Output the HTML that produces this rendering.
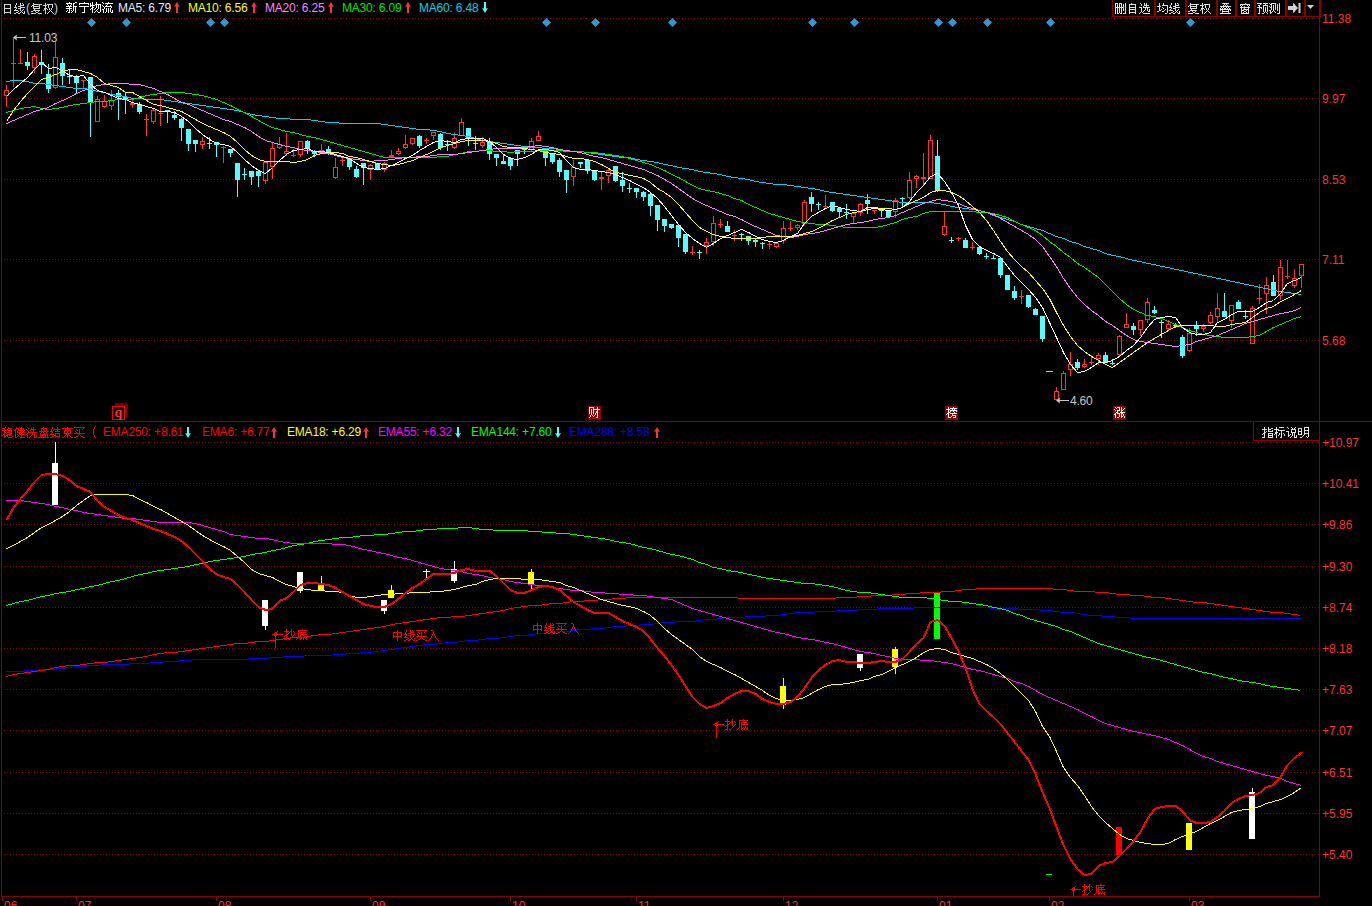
<!DOCTYPE html>
<html><head><meta charset="utf-8"><style>
html,body{margin:0;padding:0;background:#000;}
body{width:1372px;height:906px;overflow:hidden;position:relative;font-family:"Liberation Sans",sans-serif;}
.t{position:absolute;white-space:nowrap;font-size:12px;line-height:14px;letter-spacing:-0.2px;}
.ax{position:absolute;left:1322px;font-size:12px;line-height:12px;color:#ff3232;white-space:nowrap;}
.btn{position:absolute;top:0;height:16px;border:1px solid #8c0000;border-top:none;color:#e0e0e0;font-size:12px;line-height:16px;text-align:center;box-sizing:border-box;}
.mk{position:absolute;font-size:12px;line-height:14px;color:#ff0000;white-space:nowrap;}
.lab{position:absolute;top:406px;width:13px;height:14px;background:#990000;color:#fff;font-size:12px;line-height:14px;text-align:center;}
</style></head><body>
<svg width="1372" height="906" viewBox="0 0 1372 906" style="position:absolute;left:0;top:0"><g shape-rendering="crispEdges"><line x1="4" y1="18.5" x2="1319" y2="18.5" stroke="#8c0000" stroke-width="1" stroke-dasharray="1 2"/><line x1="4" y1="98.5" x2="1319" y2="98.5" stroke="#8c0000" stroke-width="1" stroke-dasharray="1 2"/><line x1="4" y1="179.5" x2="1319" y2="179.5" stroke="#8c0000" stroke-width="1" stroke-dasharray="1 2"/><line x1="4" y1="259.5" x2="1319" y2="259.5" stroke="#8c0000" stroke-width="1" stroke-dasharray="1 2"/><line x1="4" y1="340.5" x2="1319" y2="340.5" stroke="#8c0000" stroke-width="1" stroke-dasharray="1 2"/><line x1="4" y1="442.5" x2="1319" y2="442.5" stroke="#8c0000" stroke-width="1" stroke-dasharray="1 2"/><line x1="4" y1="483.5" x2="1319" y2="483.5" stroke="#8c0000" stroke-width="1" stroke-dasharray="1 2"/><line x1="4" y1="524.5" x2="1319" y2="524.5" stroke="#8c0000" stroke-width="1" stroke-dasharray="1 2"/><line x1="4" y1="566.5" x2="1319" y2="566.5" stroke="#8c0000" stroke-width="1" stroke-dasharray="1 2"/><line x1="4" y1="607.5" x2="1319" y2="607.5" stroke="#8c0000" stroke-width="1" stroke-dasharray="1 2"/><line x1="4" y1="648.5" x2="1319" y2="648.5" stroke="#8c0000" stroke-width="1" stroke-dasharray="1 2"/><line x1="4" y1="689.5" x2="1319" y2="689.5" stroke="#8c0000" stroke-width="1" stroke-dasharray="1 2"/><line x1="4" y1="730.5" x2="1319" y2="730.5" stroke="#8c0000" stroke-width="1" stroke-dasharray="1 2"/><line x1="4" y1="772.5" x2="1319" y2="772.5" stroke="#8c0000" stroke-width="1" stroke-dasharray="1 2"/><line x1="4" y1="813.5" x2="1319" y2="813.5" stroke="#8c0000" stroke-width="1" stroke-dasharray="1 2"/><line x1="4" y1="854.5" x2="1319" y2="854.5" stroke="#8c0000" stroke-width="1" stroke-dasharray="1 2"/><rect x="1" y="0" width="1" height="897" fill="#8c0000"/><rect x="1319" y="0" width="1" height="897" fill="#8c0000"/><rect x="1" y="421" width="1371" height="1" fill="#8c0000"/><rect x="1" y="896" width="1319" height="1" fill="#8c0000"/><rect x="2" y="897" width="1" height="4" fill="#8c0000"/><rect x="76" y="897" width="1" height="4" fill="#8c0000"/><rect x="216" y="897" width="1" height="4" fill="#8c0000"/><rect x="370" y="897" width="1" height="4" fill="#8c0000"/><rect x="510" y="897" width="1" height="4" fill="#8c0000"/><rect x="636" y="897" width="1" height="4" fill="#8c0000"/><rect x="783" y="897" width="1" height="4" fill="#8c0000"/><rect x="937" y="897" width="1" height="4" fill="#8c0000"/><rect x="1049" y="897" width="1" height="4" fill="#8c0000"/><rect x="1189" y="897" width="1" height="4" fill="#8c0000"/></g><g shape-rendering="crispEdges"><rect x="6" y="85" width="1" height="5" fill="#ff3232"/>
<rect x="6" y="96" width="1" height="11" fill="#ff3232"/>
<rect x="4.5" y="90.5" width="4" height="5" fill="none" stroke="#ff3232" stroke-width="1"/>
<rect x="13" y="38" width="1" height="49" fill="#ff3232"/>
<rect x="11" y="63" width="5" height="1" fill="#ff3232"/>
<rect x="20" y="49" width="1" height="15" fill="#ff3232"/>
<rect x="18" y="63" width="5" height="1" fill="#ff3232"/>
<rect x="27" y="52" width="1" height="10" fill="#54fcfc"/>
<rect x="27" y="66" width="1" height="4" fill="#54fcfc"/>
<rect x="25" y="62" width="5" height="4" fill="#54fcfc"/>
<rect x="34" y="54" width="1" height="2" fill="#ff3232"/>
<rect x="34" y="68" width="1" height="5" fill="#ff3232"/>
<rect x="32.5" y="56.5" width="4" height="11" fill="none" stroke="#ff3232" stroke-width="1"/>
<rect x="41" y="50" width="1" height="12" fill="#54fcfc"/>
<rect x="41" y="65" width="1" height="9" fill="#54fcfc"/>
<rect x="39" y="62" width="5" height="3" fill="#54fcfc"/>
<rect x="48" y="64" width="1" height="10" fill="#54fcfc"/>
<rect x="48" y="89" width="1" height="4" fill="#54fcfc"/>
<rect x="46" y="74" width="5" height="15" fill="#54fcfc"/>
<rect x="55" y="41" width="1" height="16" fill="#ff3232"/>
<rect x="55" y="88" width="1" height="1" fill="#ff3232"/>
<rect x="53.5" y="57.5" width="4" height="30" fill="none" stroke="#ff3232" stroke-width="1"/>
<rect x="62" y="58" width="1" height="5" fill="#54fcfc"/>
<rect x="62" y="76" width="1" height="9" fill="#54fcfc"/>
<rect x="60" y="63" width="5" height="13" fill="#54fcfc"/>
<rect x="69" y="70" width="1" height="14" fill="#54fcfc"/>
<rect x="67" y="76" width="5" height="1" fill="#54fcfc"/>
<rect x="76" y="75" width="1" height="1" fill="#54fcfc"/>
<rect x="76" y="83" width="1" height="11" fill="#54fcfc"/>
<rect x="74" y="76" width="5" height="7" fill="#54fcfc"/>
<rect x="83" y="80" width="1" height="8" fill="#ff3232"/>
<rect x="81" y="80" width="5" height="1" fill="#ff3232"/>
<rect x="90" y="102" width="1" height="35" fill="#54fcfc"/>
<rect x="88" y="77" width="5" height="25" fill="#54fcfc"/>
<rect x="97" y="96" width="1" height="3" fill="#ff3232"/>
<rect x="95.5" y="99.5" width="4" height="22" fill="none" stroke="#ff3232" stroke-width="1"/>
<rect x="104" y="95" width="1" height="6" fill="#ff3232"/>
<rect x="104" y="107" width="1" height="1" fill="#ff3232"/>
<rect x="102.5" y="101.5" width="4" height="5" fill="none" stroke="#ff3232" stroke-width="1"/>
<rect x="111" y="90" width="1" height="10" fill="#ff3232"/>
<rect x="111" y="106" width="1" height="4" fill="#ff3232"/>
<rect x="109.5" y="100.5" width="4" height="5" fill="none" stroke="#ff3232" stroke-width="1"/>
<rect x="118" y="90" width="1" height="3" fill="#54fcfc"/>
<rect x="118" y="97" width="1" height="23" fill="#54fcfc"/>
<rect x="116" y="93" width="5" height="4" fill="#54fcfc"/>
<rect x="125" y="92" width="1" height="5" fill="#54fcfc"/>
<rect x="125" y="100" width="1" height="14" fill="#54fcfc"/>
<rect x="123" y="97" width="5" height="3" fill="#54fcfc"/>
<rect x="132" y="99" width="1" height="4" fill="#ff3232"/>
<rect x="132" y="105" width="1" height="3" fill="#ff3232"/>
<rect x="130.5" y="103.5" width="4" height="1" fill="none" stroke="#ff3232" stroke-width="1"/>
<rect x="139" y="102" width="1" height="2" fill="#54fcfc"/>
<rect x="139" y="112" width="1" height="2" fill="#54fcfc"/>
<rect x="137" y="104" width="5" height="8" fill="#54fcfc"/>
<rect x="146" y="114" width="1" height="22" fill="#ff3232"/>
<rect x="144" y="119" width="5" height="1" fill="#ff3232"/>
<rect x="153" y="108" width="1" height="2" fill="#ff3232"/>
<rect x="153" y="122" width="1" height="2" fill="#ff3232"/>
<rect x="151.5" y="110.5" width="4" height="11" fill="none" stroke="#ff3232" stroke-width="1"/>
<rect x="160" y="96" width="1" height="30" fill="#ff3232"/>
<rect x="158" y="113" width="5" height="1" fill="#ff3232"/>
<rect x="167" y="112" width="1" height="11" fill="#54fcfc"/>
<rect x="165" y="110" width="5" height="2" fill="#54fcfc"/>
<rect x="174" y="111" width="1" height="4" fill="#54fcfc"/>
<rect x="174" y="118" width="1" height="2" fill="#54fcfc"/>
<rect x="172" y="115" width="5" height="3" fill="#54fcfc"/>
<rect x="181" y="118" width="1" height="1" fill="#54fcfc"/>
<rect x="181" y="128" width="1" height="13" fill="#54fcfc"/>
<rect x="179" y="119" width="5" height="9" fill="#54fcfc"/>
<rect x="188" y="144" width="1" height="7" fill="#54fcfc"/>
<rect x="186" y="129" width="5" height="15" fill="#54fcfc"/>
<rect x="195" y="144" width="1" height="8" fill="#54fcfc"/>
<rect x="193" y="140" width="5" height="4" fill="#54fcfc"/>
<rect x="202" y="137" width="1" height="4" fill="#ff3232"/>
<rect x="202" y="145" width="1" height="4" fill="#ff3232"/>
<rect x="200.5" y="141.5" width="4" height="3" fill="none" stroke="#ff3232" stroke-width="1"/>
<rect x="209" y="137" width="1" height="12" fill="#54fcfc"/>
<rect x="207" y="143" width="5" height="1" fill="#54fcfc"/>
<rect x="216" y="145" width="1" height="12" fill="#54fcfc"/>
<rect x="214" y="142" width="5" height="3" fill="#54fcfc"/>
<rect x="223" y="146" width="1" height="17" fill="#ff3232"/>
<rect x="221" y="147" width="5" height="1" fill="#ff3232"/>
<rect x="230" y="153" width="1" height="4" fill="#54fcfc"/>
<rect x="228" y="149" width="5" height="4" fill="#54fcfc"/>
<rect x="237" y="180" width="1" height="17" fill="#54fcfc"/>
<rect x="235" y="163" width="5" height="17" fill="#54fcfc"/>
<rect x="244" y="168" width="1" height="12" fill="#54fcfc"/>
<rect x="242" y="174" width="5" height="1" fill="#54fcfc"/>
<rect x="251" y="177" width="1" height="8" fill="#54fcfc"/>
<rect x="249" y="171" width="5" height="6" fill="#54fcfc"/>
<rect x="258" y="176" width="1" height="11" fill="#54fcfc"/>
<rect x="256" y="171" width="5" height="5" fill="#54fcfc"/>
<rect x="265" y="181" width="1" height="3" fill="#ff3232"/>
<rect x="263.5" y="162.5" width="4" height="18" fill="none" stroke="#ff3232" stroke-width="1"/>
<rect x="272" y="142" width="1" height="6" fill="#ff3232"/>
<rect x="272" y="167" width="1" height="12" fill="#ff3232"/>
<rect x="270.5" y="148.5" width="4" height="18" fill="none" stroke="#ff3232" stroke-width="1"/>
<rect x="279" y="137" width="1" height="7" fill="#ff3232"/>
<rect x="279" y="148" width="1" height="1" fill="#ff3232"/>
<rect x="277.5" y="144.5" width="4" height="3" fill="none" stroke="#ff3232" stroke-width="1"/>
<rect x="286" y="133" width="1" height="18" fill="#ff3232"/>
<rect x="286" y="154" width="1" height="2" fill="#ff3232"/>
<rect x="284.5" y="151.5" width="4" height="2" fill="none" stroke="#ff3232" stroke-width="1"/>
<rect x="293" y="149" width="1" height="8" fill="#ff3232"/>
<rect x="291" y="155" width="5" height="1" fill="#ff3232"/>
<rect x="300" y="155" width="1" height="2" fill="#ff3232"/>
<rect x="298.5" y="141.5" width="4" height="13" fill="none" stroke="#ff3232" stroke-width="1"/>
<rect x="307" y="140" width="1" height="1" fill="#54fcfc"/>
<rect x="307" y="149" width="1" height="5" fill="#54fcfc"/>
<rect x="305" y="141" width="5" height="8" fill="#54fcfc"/>
<rect x="314" y="150" width="1" height="1" fill="#54fcfc"/>
<rect x="314" y="154" width="1" height="3" fill="#54fcfc"/>
<rect x="312" y="151" width="5" height="3" fill="#54fcfc"/>
<rect x="321" y="144" width="1" height="6" fill="#ff3232"/>
<rect x="319.5" y="150.5" width="4" height="3" fill="none" stroke="#ff3232" stroke-width="1"/>
<rect x="328" y="146" width="1" height="3" fill="#54fcfc"/>
<rect x="328" y="154" width="1" height="1" fill="#54fcfc"/>
<rect x="326" y="149" width="5" height="5" fill="#54fcfc"/>
<rect x="335" y="158" width="1" height="9" fill="#ff3232"/>
<rect x="335" y="178" width="1" height="1" fill="#ff3232"/>
<rect x="333.5" y="167.5" width="4" height="10" fill="none" stroke="#ff3232" stroke-width="1"/>
<rect x="342" y="156" width="1" height="10" fill="#ff3232"/>
<rect x="340" y="160" width="5" height="1" fill="#ff3232"/>
<rect x="349" y="167" width="1" height="3" fill="#54fcfc"/>
<rect x="347" y="159" width="5" height="8" fill="#54fcfc"/>
<rect x="356" y="166" width="1" height="3" fill="#54fcfc"/>
<rect x="356" y="177" width="1" height="1" fill="#54fcfc"/>
<rect x="354" y="169" width="5" height="8" fill="#54fcfc"/>
<rect x="363" y="168" width="1" height="17" fill="#54fcfc"/>
<rect x="361" y="163" width="5" height="5" fill="#54fcfc"/>
<rect x="370" y="164" width="1" height="1" fill="#ff3232"/>
<rect x="370" y="170" width="1" height="10" fill="#ff3232"/>
<rect x="368.5" y="165.5" width="4" height="4" fill="none" stroke="#ff3232" stroke-width="1"/>
<rect x="377" y="169" width="1" height="1" fill="#54fcfc"/>
<rect x="375" y="163" width="5" height="6" fill="#54fcfc"/>
<rect x="384" y="162" width="1" height="1" fill="#ff3232"/>
<rect x="384" y="170" width="1" height="2" fill="#ff3232"/>
<rect x="382.5" y="163.5" width="4" height="6" fill="none" stroke="#ff3232" stroke-width="1"/>
<rect x="391" y="150" width="1" height="5" fill="#ff3232"/>
<rect x="391" y="157" width="1" height="1" fill="#ff3232"/>
<rect x="389.5" y="155.5" width="4" height="1" fill="none" stroke="#ff3232" stroke-width="1"/>
<rect x="398" y="148" width="1" height="3" fill="#ff3232"/>
<rect x="398" y="154" width="1" height="1" fill="#ff3232"/>
<rect x="396.5" y="151.5" width="4" height="2" fill="none" stroke="#ff3232" stroke-width="1"/>
<rect x="405" y="135" width="1" height="9" fill="#ff3232"/>
<rect x="405" y="148" width="1" height="1" fill="#ff3232"/>
<rect x="403.5" y="144.5" width="4" height="3" fill="none" stroke="#ff3232" stroke-width="1"/>
<rect x="412" y="144" width="1" height="1" fill="#ff3232"/>
<rect x="410.5" y="138.5" width="4" height="5" fill="none" stroke="#ff3232" stroke-width="1"/>
<rect x="419" y="135" width="1" height="1" fill="#54fcfc"/>
<rect x="419" y="146" width="1" height="2" fill="#54fcfc"/>
<rect x="417" y="136" width="5" height="10" fill="#54fcfc"/>
<rect x="426" y="138" width="1" height="6" fill="#ff3232"/>
<rect x="424" y="140" width="5" height="1" fill="#ff3232"/>
<rect x="433" y="136" width="1" height="4" fill="#ff3232"/>
<rect x="431.5" y="132.5" width="4" height="3" fill="none" stroke="#ff3232" stroke-width="1"/>
<rect x="440" y="133" width="1" height="1" fill="#54fcfc"/>
<rect x="440" y="148" width="1" height="2" fill="#54fcfc"/>
<rect x="438" y="134" width="5" height="14" fill="#54fcfc"/>
<rect x="447" y="140" width="1" height="11" fill="#54fcfc"/>
<rect x="445" y="144" width="5" height="1" fill="#54fcfc"/>
<rect x="454" y="132" width="1" height="6" fill="#ff3232"/>
<rect x="454" y="148" width="1" height="1" fill="#ff3232"/>
<rect x="452.5" y="138.5" width="4" height="9" fill="none" stroke="#ff3232" stroke-width="1"/>
<rect x="461" y="118" width="1" height="4" fill="#ff3232"/>
<rect x="459.5" y="122.5" width="4" height="13" fill="none" stroke="#ff3232" stroke-width="1"/>
<rect x="468" y="139" width="1" height="7" fill="#54fcfc"/>
<rect x="466" y="128" width="5" height="11" fill="#54fcfc"/>
<rect x="475" y="136" width="1" height="14" fill="#54fcfc"/>
<rect x="473" y="143" width="5" height="1" fill="#54fcfc"/>
<rect x="482" y="137" width="1" height="5" fill="#ff3232"/>
<rect x="482" y="146" width="1" height="2" fill="#ff3232"/>
<rect x="480.5" y="142.5" width="4" height="3" fill="none" stroke="#ff3232" stroke-width="1"/>
<rect x="489" y="138" width="1" height="3" fill="#54fcfc"/>
<rect x="489" y="154" width="1" height="6" fill="#54fcfc"/>
<rect x="487" y="141" width="5" height="13" fill="#54fcfc"/>
<rect x="496" y="158" width="1" height="8" fill="#54fcfc"/>
<rect x="494" y="154" width="5" height="4" fill="#54fcfc"/>
<rect x="503" y="154" width="1" height="7" fill="#54fcfc"/>
<rect x="501" y="161" width="5" height="3" fill="#54fcfc"/>
<rect x="510" y="157" width="1" height="1" fill="#54fcfc"/>
<rect x="510" y="166" width="1" height="4" fill="#54fcfc"/>
<rect x="508" y="158" width="5" height="8" fill="#54fcfc"/>
<rect x="517" y="154" width="1" height="12" fill="#54fcfc"/>
<rect x="515" y="150" width="5" height="4" fill="#54fcfc"/>
<rect x="524" y="148" width="1" height="6" fill="#54fcfc"/>
<rect x="522" y="149" width="5" height="1" fill="#54fcfc"/>
<rect x="531" y="138" width="1" height="3" fill="#ff3232"/>
<rect x="531" y="150" width="1" height="1" fill="#ff3232"/>
<rect x="529.5" y="141.5" width="4" height="8" fill="none" stroke="#ff3232" stroke-width="1"/>
<rect x="538" y="131" width="1" height="5" fill="#ff3232"/>
<rect x="536.5" y="136.5" width="4" height="4" fill="none" stroke="#ff3232" stroke-width="1"/>
<rect x="545" y="149" width="1" height="2" fill="#54fcfc"/>
<rect x="545" y="158" width="1" height="8" fill="#54fcfc"/>
<rect x="543" y="151" width="5" height="7" fill="#54fcfc"/>
<rect x="552" y="162" width="1" height="2" fill="#54fcfc"/>
<rect x="550" y="154" width="5" height="8" fill="#54fcfc"/>
<rect x="559" y="158" width="1" height="2" fill="#54fcfc"/>
<rect x="559" y="172" width="1" height="5" fill="#54fcfc"/>
<rect x="557" y="160" width="5" height="12" fill="#54fcfc"/>
<rect x="566" y="180" width="1" height="13" fill="#54fcfc"/>
<rect x="564" y="170" width="5" height="10" fill="#54fcfc"/>
<rect x="573" y="160" width="1" height="7" fill="#ff3232"/>
<rect x="573" y="177" width="1" height="9" fill="#ff3232"/>
<rect x="571.5" y="167.5" width="4" height="9" fill="none" stroke="#ff3232" stroke-width="1"/>
<rect x="580" y="164" width="1" height="4" fill="#54fcfc"/>
<rect x="578" y="162" width="5" height="2" fill="#54fcfc"/>
<rect x="587" y="171" width="1" height="3" fill="#54fcfc"/>
<rect x="585" y="160" width="5" height="11" fill="#54fcfc"/>
<rect x="594" y="170" width="1" height="1" fill="#54fcfc"/>
<rect x="594" y="180" width="1" height="1" fill="#54fcfc"/>
<rect x="592" y="171" width="5" height="9" fill="#54fcfc"/>
<rect x="601" y="172" width="1" height="5" fill="#ff3232"/>
<rect x="601" y="179" width="1" height="11" fill="#ff3232"/>
<rect x="599.5" y="177.5" width="4" height="1" fill="none" stroke="#ff3232" stroke-width="1"/>
<rect x="608" y="168" width="1" height="2" fill="#ff3232"/>
<rect x="608" y="176" width="1" height="7" fill="#ff3232"/>
<rect x="606.5" y="170.5" width="4" height="5" fill="none" stroke="#ff3232" stroke-width="1"/>
<rect x="615" y="181" width="1" height="1" fill="#54fcfc"/>
<rect x="613" y="166" width="5" height="15" fill="#54fcfc"/>
<rect x="622" y="172" width="1" height="8" fill="#54fcfc"/>
<rect x="622" y="186" width="1" height="6" fill="#54fcfc"/>
<rect x="620" y="180" width="5" height="6" fill="#54fcfc"/>
<rect x="629" y="183" width="1" height="10" fill="#54fcfc"/>
<rect x="627" y="188" width="5" height="1" fill="#54fcfc"/>
<rect x="636" y="192" width="1" height="6" fill="#54fcfc"/>
<rect x="634" y="188" width="5" height="4" fill="#54fcfc"/>
<rect x="643" y="191" width="1" height="1" fill="#54fcfc"/>
<rect x="643" y="197" width="1" height="4" fill="#54fcfc"/>
<rect x="641" y="192" width="5" height="5" fill="#54fcfc"/>
<rect x="650" y="193" width="1" height="1" fill="#54fcfc"/>
<rect x="650" y="206" width="1" height="10" fill="#54fcfc"/>
<rect x="648" y="194" width="5" height="12" fill="#54fcfc"/>
<rect x="657" y="220" width="1" height="11" fill="#54fcfc"/>
<rect x="655" y="205" width="5" height="15" fill="#54fcfc"/>
<rect x="664" y="226" width="1" height="6" fill="#54fcfc"/>
<rect x="662" y="219" width="5" height="7" fill="#54fcfc"/>
<rect x="671" y="228" width="1" height="1" fill="#54fcfc"/>
<rect x="669" y="224" width="5" height="4" fill="#54fcfc"/>
<rect x="678" y="238" width="1" height="9" fill="#54fcfc"/>
<rect x="676" y="225" width="5" height="13" fill="#54fcfc"/>
<rect x="685" y="252" width="1" height="2" fill="#54fcfc"/>
<rect x="683" y="234" width="5" height="18" fill="#54fcfc"/>
<rect x="692" y="246" width="1" height="9" fill="#ff3232"/>
<rect x="690" y="252" width="5" height="1" fill="#ff3232"/>
<rect x="699" y="250" width="1" height="9" fill="#54fcfc"/>
<rect x="697" y="252" width="5" height="1" fill="#54fcfc"/>
<rect x="706" y="238" width="1" height="4" fill="#ff3232"/>
<rect x="706" y="246" width="1" height="8" fill="#ff3232"/>
<rect x="704.5" y="242.5" width="4" height="3" fill="none" stroke="#ff3232" stroke-width="1"/>
<rect x="713" y="216" width="1" height="7" fill="#ff3232"/>
<rect x="713" y="242" width="1" height="4" fill="#ff3232"/>
<rect x="711.5" y="223.5" width="4" height="18" fill="none" stroke="#ff3232" stroke-width="1"/>
<rect x="720" y="219" width="1" height="9" fill="#ff3232"/>
<rect x="718" y="224" width="5" height="1" fill="#ff3232"/>
<rect x="727" y="221" width="1" height="5" fill="#54fcfc"/>
<rect x="725" y="226" width="5" height="6" fill="#54fcfc"/>
<rect x="734" y="230" width="1" height="11" fill="#ff3232"/>
<rect x="732" y="235" width="5" height="1" fill="#ff3232"/>
<rect x="741" y="233" width="1" height="8" fill="#54fcfc"/>
<rect x="739" y="234" width="5" height="1" fill="#54fcfc"/>
<rect x="748" y="241" width="1" height="4" fill="#54fcfc"/>
<rect x="746" y="236" width="5" height="5" fill="#54fcfc"/>
<rect x="755" y="238" width="1" height="2" fill="#54fcfc"/>
<rect x="755" y="242" width="1" height="5" fill="#54fcfc"/>
<rect x="753" y="240" width="5" height="2" fill="#54fcfc"/>
<rect x="762" y="242" width="1" height="7" fill="#54fcfc"/>
<rect x="760" y="243" width="5" height="1" fill="#54fcfc"/>
<rect x="769" y="242" width="1" height="7" fill="#ff3232"/>
<rect x="767" y="244" width="5" height="1" fill="#ff3232"/>
<rect x="776" y="242" width="1" height="1" fill="#ff3232"/>
<rect x="776" y="247" width="1" height="1" fill="#ff3232"/>
<rect x="774.5" y="243.5" width="4" height="3" fill="none" stroke="#ff3232" stroke-width="1"/>
<rect x="783" y="221" width="1" height="7" fill="#ff3232"/>
<rect x="783" y="241" width="1" height="3" fill="#ff3232"/>
<rect x="781.5" y="228.5" width="4" height="12" fill="none" stroke="#ff3232" stroke-width="1"/>
<rect x="790" y="221" width="1" height="10" fill="#ff3232"/>
<rect x="788" y="228" width="5" height="1" fill="#ff3232"/>
<rect x="797" y="224" width="1" height="1" fill="#ff3232"/>
<rect x="797" y="228" width="1" height="2" fill="#ff3232"/>
<rect x="795.5" y="225.5" width="4" height="2" fill="none" stroke="#ff3232" stroke-width="1"/>
<rect x="804" y="200" width="1" height="2" fill="#ff3232"/>
<rect x="804" y="224" width="1" height="1" fill="#ff3232"/>
<rect x="802.5" y="202.5" width="4" height="21" fill="none" stroke="#ff3232" stroke-width="1"/>
<rect x="811" y="192" width="1" height="5" fill="#54fcfc"/>
<rect x="811" y="204" width="1" height="8" fill="#54fcfc"/>
<rect x="809" y="197" width="5" height="7" fill="#54fcfc"/>
<rect x="818" y="202" width="1" height="8" fill="#54fcfc"/>
<rect x="816" y="204" width="5" height="1" fill="#54fcfc"/>
<rect x="825" y="195" width="1" height="13" fill="#ff3232"/>
<rect x="823" y="206" width="5" height="1" fill="#ff3232"/>
<rect x="832" y="211" width="1" height="1" fill="#54fcfc"/>
<rect x="830" y="202" width="5" height="9" fill="#54fcfc"/>
<rect x="839" y="212" width="1" height="6" fill="#54fcfc"/>
<rect x="837" y="208" width="5" height="4" fill="#54fcfc"/>
<rect x="846" y="204" width="1" height="15" fill="#54fcfc"/>
<rect x="844" y="212" width="5" height="1" fill="#54fcfc"/>
<rect x="853" y="212" width="1" height="1" fill="#ff3232"/>
<rect x="853" y="217" width="1" height="6" fill="#ff3232"/>
<rect x="851.5" y="213.5" width="4" height="3" fill="none" stroke="#ff3232" stroke-width="1"/>
<rect x="860" y="203" width="1" height="1" fill="#ff3232"/>
<rect x="860" y="213" width="1" height="3" fill="#ff3232"/>
<rect x="858.5" y="204.5" width="4" height="8" fill="none" stroke="#ff3232" stroke-width="1"/>
<rect x="867" y="194" width="1" height="6" fill="#54fcfc"/>
<rect x="867" y="204" width="1" height="10" fill="#54fcfc"/>
<rect x="865" y="200" width="5" height="4" fill="#54fcfc"/>
<rect x="874" y="210" width="1" height="4" fill="#ff3232"/>
<rect x="872" y="210" width="5" height="1" fill="#ff3232"/>
<rect x="881" y="208" width="1" height="9" fill="#54fcfc"/>
<rect x="879" y="210" width="5" height="1" fill="#54fcfc"/>
<rect x="888" y="217" width="1" height="1" fill="#54fcfc"/>
<rect x="886" y="210" width="5" height="7" fill="#54fcfc"/>
<rect x="895" y="198" width="1" height="2" fill="#ff3232"/>
<rect x="895" y="212" width="1" height="6" fill="#ff3232"/>
<rect x="893.5" y="200.5" width="4" height="11" fill="none" stroke="#ff3232" stroke-width="1"/>
<rect x="902" y="197" width="1" height="10" fill="#54fcfc"/>
<rect x="900" y="198" width="5" height="1" fill="#54fcfc"/>
<rect x="909" y="172" width="1" height="8" fill="#ff3232"/>
<rect x="909" y="198" width="1" height="1" fill="#ff3232"/>
<rect x="907.5" y="180.5" width="4" height="17" fill="none" stroke="#ff3232" stroke-width="1"/>
<rect x="916" y="175" width="1" height="1" fill="#ff3232"/>
<rect x="916" y="179" width="1" height="9" fill="#ff3232"/>
<rect x="914.5" y="176.5" width="4" height="2" fill="none" stroke="#ff3232" stroke-width="1"/>
<rect x="923" y="153" width="1" height="24" fill="#ff3232"/>
<rect x="923" y="179" width="1" height="6" fill="#ff3232"/>
<rect x="921.5" y="177.5" width="4" height="1" fill="none" stroke="#ff3232" stroke-width="1"/>
<rect x="930" y="135" width="1" height="5" fill="#ff3232"/>
<rect x="928.5" y="140.5" width="4" height="38" fill="none" stroke="#ff3232" stroke-width="1"/>
<rect x="937" y="140" width="1" height="16" fill="#54fcfc"/>
<rect x="937" y="191" width="1" height="1" fill="#54fcfc"/>
<rect x="935" y="156" width="5" height="35" fill="#54fcfc"/>
<rect x="944" y="211" width="1" height="15" fill="#ff3232"/>
<rect x="944" y="235" width="1" height="1" fill="#ff3232"/>
<rect x="942.5" y="226.5" width="4" height="8" fill="none" stroke="#ff3232" stroke-width="1"/>
<rect x="951" y="237" width="1" height="6" fill="#54fcfc"/>
<rect x="949" y="240" width="5" height="1" fill="#54fcfc"/>
<rect x="958" y="237" width="1" height="4" fill="#ff3232"/>
<rect x="956" y="238" width="5" height="1" fill="#ff3232"/>
<rect x="965" y="238" width="1" height="2" fill="#54fcfc"/>
<rect x="963" y="240" width="5" height="8" fill="#54fcfc"/>
<rect x="972" y="242" width="1" height="8" fill="#ff3232"/>
<rect x="970" y="247" width="5" height="1" fill="#ff3232"/>
<rect x="979" y="246" width="1" height="1" fill="#54fcfc"/>
<rect x="979" y="254" width="1" height="1" fill="#54fcfc"/>
<rect x="977" y="247" width="5" height="7" fill="#54fcfc"/>
<rect x="986" y="253" width="1" height="6" fill="#54fcfc"/>
<rect x="984" y="256" width="5" height="1" fill="#54fcfc"/>
<rect x="993" y="255" width="1" height="4" fill="#54fcfc"/>
<rect x="991" y="258" width="5" height="1" fill="#54fcfc"/>
<rect x="1000" y="275" width="1" height="3" fill="#54fcfc"/>
<rect x="998" y="258" width="5" height="17" fill="#54fcfc"/>
<rect x="1005" y="275" width="5" height="15" fill="#54fcfc"/>
<rect x="1014" y="286" width="1" height="5" fill="#54fcfc"/>
<rect x="1014" y="298" width="1" height="2" fill="#54fcfc"/>
<rect x="1012" y="291" width="5" height="7" fill="#54fcfc"/>
<rect x="1021" y="290" width="1" height="14" fill="#ff3232"/>
<rect x="1019" y="296" width="5" height="1" fill="#ff3232"/>
<rect x="1028" y="307" width="1" height="1" fill="#54fcfc"/>
<rect x="1026" y="295" width="5" height="12" fill="#54fcfc"/>
<rect x="1035" y="308" width="1" height="1" fill="#54fcfc"/>
<rect x="1033" y="309" width="5" height="6" fill="#54fcfc"/>
<rect x="1042" y="339" width="1" height="3" fill="#54fcfc"/>
<rect x="1040" y="316" width="5" height="23" fill="#54fcfc"/>
<rect x="1046" y="371" width="7" height="1" fill="#54fcfc"/>
<rect x="1056" y="387" width="1" height="4" fill="#ff3232"/>
<rect x="1054.5" y="391.5" width="4" height="8" fill="none" stroke="#ff3232" stroke-width="1"/>
<rect x="1063" y="371" width="1" height="2" fill="#ff3232"/>
<rect x="1061.5" y="373.5" width="4" height="16" fill="none" stroke="#ff3232" stroke-width="1"/>
<rect x="1070" y="352" width="1" height="12" fill="#ff3232"/>
<rect x="1070" y="370" width="1" height="6" fill="#ff3232"/>
<rect x="1068.5" y="364.5" width="4" height="5" fill="none" stroke="#ff3232" stroke-width="1"/>
<rect x="1077" y="359" width="1" height="3" fill="#54fcfc"/>
<rect x="1077" y="368" width="1" height="2" fill="#54fcfc"/>
<rect x="1075" y="362" width="5" height="6" fill="#54fcfc"/>
<rect x="1084" y="359" width="1" height="5" fill="#ff3232"/>
<rect x="1084" y="367" width="1" height="1" fill="#ff3232"/>
<rect x="1082.5" y="364.5" width="4" height="2" fill="none" stroke="#ff3232" stroke-width="1"/>
<rect x="1091" y="355" width="1" height="10" fill="#ff3232"/>
<rect x="1089" y="362" width="5" height="1" fill="#ff3232"/>
<rect x="1098" y="353" width="1" height="2" fill="#ff3232"/>
<rect x="1098" y="359" width="1" height="6" fill="#ff3232"/>
<rect x="1096.5" y="355.5" width="4" height="3" fill="none" stroke="#ff3232" stroke-width="1"/>
<rect x="1105" y="352" width="1" height="3" fill="#54fcfc"/>
<rect x="1103" y="355" width="5" height="8" fill="#54fcfc"/>
<rect x="1112" y="359" width="1" height="6" fill="#54fcfc"/>
<rect x="1110" y="363" width="5" height="1" fill="#54fcfc"/>
<rect x="1119" y="335" width="1" height="1" fill="#ff3232"/>
<rect x="1119" y="355" width="1" height="1" fill="#ff3232"/>
<rect x="1117.5" y="336.5" width="4" height="18" fill="none" stroke="#ff3232" stroke-width="1"/>
<rect x="1126" y="313" width="1" height="11" fill="#ff3232"/>
<rect x="1124.5" y="324.5" width="4" height="3" fill="none" stroke="#ff3232" stroke-width="1"/>
<rect x="1133" y="323" width="1" height="3" fill="#54fcfc"/>
<rect x="1133" y="330" width="1" height="5" fill="#54fcfc"/>
<rect x="1131" y="326" width="5" height="4" fill="#54fcfc"/>
<rect x="1140" y="330" width="1" height="6" fill="#ff3232"/>
<rect x="1138.5" y="320.5" width="4" height="9" fill="none" stroke="#ff3232" stroke-width="1"/>
<rect x="1147" y="298" width="1" height="4" fill="#ff3232"/>
<rect x="1147" y="320" width="1" height="3" fill="#ff3232"/>
<rect x="1145.5" y="302.5" width="4" height="17" fill="none" stroke="#ff3232" stroke-width="1"/>
<rect x="1154" y="306" width="1" height="4" fill="#54fcfc"/>
<rect x="1154" y="313" width="1" height="1" fill="#54fcfc"/>
<rect x="1152" y="310" width="5" height="3" fill="#54fcfc"/>
<rect x="1161" y="320" width="1" height="18" fill="#54fcfc"/>
<rect x="1159" y="322" width="5" height="1" fill="#54fcfc"/>
<rect x="1168" y="320" width="1" height="4" fill="#ff3232"/>
<rect x="1168" y="329" width="1" height="1" fill="#ff3232"/>
<rect x="1166.5" y="324.5" width="4" height="4" fill="none" stroke="#ff3232" stroke-width="1"/>
<rect x="1175" y="323" width="1" height="5" fill="#54fcfc"/>
<rect x="1173" y="325" width="5" height="1" fill="#54fcfc"/>
<rect x="1182" y="335" width="1" height="2" fill="#54fcfc"/>
<rect x="1182" y="356" width="1" height="2" fill="#54fcfc"/>
<rect x="1180" y="337" width="5" height="19" fill="#54fcfc"/>
<rect x="1189" y="328" width="1" height="5" fill="#ff3232"/>
<rect x="1189" y="351" width="1" height="1" fill="#ff3232"/>
<rect x="1187.5" y="333.5" width="4" height="17" fill="none" stroke="#ff3232" stroke-width="1"/>
<rect x="1196" y="321" width="1" height="4" fill="#54fcfc"/>
<rect x="1196" y="329" width="1" height="7" fill="#54fcfc"/>
<rect x="1194" y="325" width="5" height="4" fill="#54fcfc"/>
<rect x="1203" y="324" width="1" height="2" fill="#ff3232"/>
<rect x="1203" y="329" width="1" height="3" fill="#ff3232"/>
<rect x="1201.5" y="326.5" width="4" height="2" fill="none" stroke="#ff3232" stroke-width="1"/>
<rect x="1210" y="312" width="1" height="3" fill="#ff3232"/>
<rect x="1210" y="323" width="1" height="1" fill="#ff3232"/>
<rect x="1208.5" y="315.5" width="4" height="7" fill="none" stroke="#ff3232" stroke-width="1"/>
<rect x="1217" y="293" width="1" height="15" fill="#ff3232"/>
<rect x="1217" y="317" width="1" height="5" fill="#ff3232"/>
<rect x="1215.5" y="308.5" width="4" height="8" fill="none" stroke="#ff3232" stroke-width="1"/>
<rect x="1224" y="293" width="1" height="18" fill="#54fcfc"/>
<rect x="1222" y="311" width="5" height="6" fill="#54fcfc"/>
<rect x="1231" y="321" width="1" height="7" fill="#ff3232"/>
<rect x="1229.5" y="305.5" width="4" height="15" fill="none" stroke="#ff3232" stroke-width="1"/>
<rect x="1238" y="300" width="1" height="2" fill="#54fcfc"/>
<rect x="1236" y="302" width="5" height="7" fill="#54fcfc"/>
<rect x="1245" y="310" width="1" height="9" fill="#54fcfc"/>
<rect x="1243" y="316" width="5" height="1" fill="#54fcfc"/>
<rect x="1252" y="306" width="1" height="2" fill="#ff3232"/>
<rect x="1250.5" y="308.5" width="4" height="35" fill="none" stroke="#ff3232" stroke-width="1"/>
<rect x="1259" y="284" width="1" height="20" fill="#ff3232"/>
<rect x="1257" y="298" width="5" height="1" fill="#ff3232"/>
<rect x="1266" y="277" width="1" height="8" fill="#ff3232"/>
<rect x="1266" y="294" width="1" height="20" fill="#ff3232"/>
<rect x="1264.5" y="285.5" width="4" height="8" fill="none" stroke="#ff3232" stroke-width="1"/>
<rect x="1273" y="275" width="1" height="7" fill="#54fcfc"/>
<rect x="1271" y="282" width="5" height="14" fill="#54fcfc"/>
<rect x="1280" y="260" width="1" height="7" fill="#ff3232"/>
<rect x="1280" y="296" width="1" height="4" fill="#ff3232"/>
<rect x="1278.5" y="267.5" width="4" height="28" fill="none" stroke="#ff3232" stroke-width="1"/>
<rect x="1287" y="260" width="1" height="19" fill="#ff3232"/>
<rect x="1285" y="276" width="5" height="1" fill="#ff3232"/>
<rect x="1294" y="269" width="1" height="9" fill="#ff3232"/>
<rect x="1294" y="286" width="1" height="2" fill="#ff3232"/>
<rect x="1292.5" y="278.5" width="4" height="7" fill="none" stroke="#ff3232" stroke-width="1"/>
<rect x="1301" y="276" width="1" height="12" fill="#ff3232"/>
<rect x="1299.5" y="264.5" width="4" height="11" fill="none" stroke="#ff3232" stroke-width="1"/></g><g shape-rendering="crispEdges"><polyline points="6.5,81.5 13.5,80.5 20.5,80.5 27.5,81.5 34.5,83.5 41.5,83.5 48.5,84.5 55.5,85.5 62.5,86.5 69.5,87.5 76.5,88.5 83.5,88.5 90.5,89.5 97.5,91.5 104.5,92.5 111.5,94.5 118.5,95.5 125.5,96.5 132.5,98.5 139.5,98.5 146.5,99.5 153.5,99.5 160.5,99.5 167.5,100.5 174.5,101.5 181.5,102.5 188.5,103.5 195.5,104.5 202.5,105.5 209.5,106.5 216.5,107.5 223.5,108.5 230.5,109.5 237.5,110.5 244.5,112.5 251.5,114.5 258.5,115.5 265.5,116.5 272.5,117.5 279.5,118.5 286.5,118.5 293.5,119.5 300.5,119.5 307.5,119.5 314.5,120.5 321.5,121.5 328.5,122.5 335.5,122.5 342.5,123.5 349.5,123.5 356.5,123.5 363.5,123.5 370.5,123.5 377.5,123.5 384.5,124.5 391.5,125.5 398.5,126.5 405.5,127.5 412.5,128.5 419.5,129.5 426.5,129.5 433.5,130.5 440.5,131.5 447.5,133.5 454.5,134.5 461.5,135.5 468.5,136.5 475.5,138.5 482.5,140.5 489.5,141.5 496.5,142.5 503.5,143.5 510.5,144.5 517.5,145.5 524.5,146.5 531.5,147.5 538.5,147.5 545.5,148.5 552.5,148.5 559.5,149.5 566.5,150.5 573.5,151.5 580.5,151.5 587.5,152.5 594.5,153.5 601.5,154.5 608.5,155.5 615.5,156.5 622.5,157.5 629.5,157.5 636.5,159.5 643.5,160.5 650.5,161.5 657.5,162.5 664.5,164.5 671.5,165.5 678.5,167.5 685.5,168.5 692.5,169.5 699.5,171.5 706.5,172.5 713.5,173.5 720.5,174.5 727.5,176.5 734.5,177.5 741.5,178.5 748.5,179.5 755.5,181.5 762.5,182.5 769.5,183.5 776.5,184.5 783.5,184.5 790.5,185.5 797.5,186.5 804.5,187.5 811.5,188.5 818.5,189.5 825.5,191.5 832.5,192.5 839.5,193.5 846.5,194.5 853.5,195.5 860.5,196.5 867.5,197.5 874.5,198.5 881.5,199.5 888.5,200.5 895.5,201.5 902.5,202.5 909.5,202.5 916.5,202.5 923.5,202.5 930.5,202.5 937.5,203.5 944.5,204.5 951.5,206.5 958.5,207.5 965.5,208.5 972.5,209.5 979.5,210.5 986.5,212.5 993.5,215.5 1000.5,217.5 1007.5,219.5 1014.5,221.5 1021.5,224.5 1028.5,226.5 1035.5,228.5 1042.5,230.5 1049.5,233.5 1056.5,236.5 1063.5,238.5 1070.5,241.5 1077.5,243.5 1084.5,246.5 1091.5,248.5 1098.5,250.5 1105.5,253.5 1112.5,255.5 1119.5,256.5 1126.5,258.5 1133.5,260.5 1140.5,261.5 1147.5,263.5 1154.5,264.5 1161.5,266.5 1168.5,267.5 1175.5,269.5 1182.5,270.5 1189.5,272.5 1196.5,273.5 1203.5,275.5 1210.5,276.5 1217.5,278.5 1224.5,279.5 1231.5,281.5 1238.5,282.5 1245.5,284.5 1252.5,285.5 1259.5,287.5 1266.5,288.5 1273.5,290.5 1280.5,291.5 1287.5,292.5 1294.5,293.5 1301.5,294.5" fill="none" stroke="#00d2f0" stroke-width="1" stroke-linejoin="round"/><polyline points="6.5,112.5 13.5,110.5 20.5,108.5 27.5,107.5 34.5,106.5 41.5,108.5 48.5,109.5 55.5,108.5 62.5,107.5 69.5,105.5 76.5,104.5 83.5,103.5 90.5,102.5 97.5,101.5 104.5,101.5 111.5,100.5 118.5,99.5 125.5,99.5 132.5,99.5 139.5,97.5 146.5,95.5 153.5,94.5 160.5,93.5 167.5,92.5 174.5,92.5 181.5,92.5 188.5,93.5 195.5,94.5 202.5,95.5 209.5,97.5 216.5,99.5 223.5,102.5 230.5,105.5 237.5,109.5 244.5,112.5 251.5,116.5 258.5,120.5 265.5,124.5 272.5,127.5 279.5,129.5 286.5,131.5 293.5,132.5 300.5,134.5 307.5,136.5 314.5,137.5 321.5,139.5 328.5,141.5 335.5,143.5 342.5,145.5 349.5,147.5 356.5,149.5 363.5,151.5 370.5,153.5 377.5,155.5 384.5,157.5 391.5,157.5 398.5,157.5 405.5,157.5 412.5,157.5 419.5,157.5 426.5,157.5 433.5,157.5 440.5,156.5 447.5,156.5 454.5,154.5 461.5,153.5 468.5,151.5 475.5,151.5 482.5,150.5 489.5,150.5 496.5,151.5 503.5,151.5 510.5,152.5 517.5,151.5 524.5,151.5 531.5,151.5 538.5,150.5 545.5,150.5 552.5,150.5 559.5,150.5 566.5,151.5 573.5,151.5 580.5,151.5 587.5,152.5 594.5,152.5 601.5,153.5 608.5,154.5 615.5,155.5 622.5,156.5 629.5,158.5 636.5,160.5 643.5,162.5 650.5,164.5 657.5,167.5 664.5,170.5 671.5,174.5 678.5,177.5 685.5,181.5 692.5,185.5 699.5,188.5 706.5,190.5 713.5,191.5 720.5,193.5 727.5,195.5 734.5,198.5 741.5,200.5 748.5,204.5 755.5,207.5 762.5,210.5 769.5,213.5 776.5,215.5 783.5,217.5 790.5,219.5 797.5,221.5 804.5,222.5 811.5,223.5 818.5,224.5 825.5,224.5 832.5,225.5 839.5,226.5 846.5,227.5 853.5,227.5 860.5,227.5 867.5,227.5 874.5,227.5 881.5,226.5 888.5,224.5 895.5,222.5 902.5,219.5 909.5,217.5 916.5,216.5 923.5,213.5 930.5,211.5 937.5,211.5 944.5,211.5 951.5,211.5 958.5,211.5 965.5,211.5 972.5,211.5 979.5,212.5 986.5,212.5 993.5,213.5 1000.5,215.5 1007.5,217.5 1014.5,221.5 1021.5,224.5 1028.5,227.5 1035.5,230.5 1042.5,235.5 1049.5,241.5 1056.5,246.5 1063.5,252.5 1070.5,257.5 1077.5,263.5 1084.5,267.5 1091.5,272.5 1098.5,277.5 1105.5,284.5 1112.5,291.5 1119.5,298.5 1126.5,304.5 1133.5,309.5 1140.5,312.5 1147.5,315.5 1154.5,316.5 1161.5,318.5 1168.5,321.5 1175.5,324.5 1182.5,327.5 1189.5,330.5 1196.5,332.5 1203.5,334.5 1210.5,335.5 1217.5,336.5 1224.5,337.5 1231.5,337.5 1238.5,337.5 1245.5,337.5 1252.5,336.5 1259.5,335.5 1266.5,331.5 1273.5,327.5 1280.5,324.5 1287.5,321.5 1294.5,318.5 1301.5,316.5" fill="none" stroke="#00e600" stroke-width="1" stroke-linejoin="round"/><polyline points="6.5,123.5 13.5,120.5 20.5,117.5 27.5,114.5 34.5,111.5 41.5,109.5 48.5,107.5 55.5,103.5 62.5,100.5 69.5,97.5 76.5,93.5 83.5,90.5 90.5,88.5 97.5,85.5 104.5,84.5 111.5,83.5 118.5,83.5 125.5,83.5 132.5,84.5 139.5,84.5 146.5,86.5 153.5,88.5 160.5,91.5 167.5,94.5 174.5,98.5 181.5,102.5 188.5,104.5 195.5,107.5 202.5,110.5 209.5,113.5 216.5,116.5 223.5,119.5 230.5,121.5 237.5,124.5 244.5,127.5 251.5,131.5 258.5,136.5 265.5,140.5 272.5,142.5 279.5,144.5 286.5,146.5 293.5,147.5 300.5,149.5 307.5,150.5 314.5,151.5 321.5,152.5 328.5,153.5 335.5,155.5 342.5,157.5 349.5,158.5 356.5,159.5 363.5,160.5 370.5,161.5 377.5,160.5 384.5,160.5 391.5,159.5 398.5,158.5 405.5,157.5 412.5,157.5 419.5,156.5 426.5,156.5 433.5,155.5 440.5,154.5 447.5,154.5 454.5,154.5 461.5,153.5 468.5,152.5 475.5,151.5 482.5,150.5 489.5,149.5 496.5,148.5 503.5,148.5 510.5,148.5 517.5,148.5 524.5,147.5 531.5,146.5 538.5,145.5 545.5,146.5 552.5,147.5 559.5,149.5 566.5,150.5 573.5,151.5 580.5,152.5 587.5,154.5 594.5,156.5 601.5,157.5 608.5,159.5 615.5,161.5 622.5,163.5 629.5,165.5 636.5,167.5 643.5,169.5 650.5,172.5 657.5,175.5 664.5,179.5 671.5,183.5 678.5,188.5 685.5,193.5 692.5,198.5 699.5,202.5 706.5,205.5 713.5,208.5 720.5,211.5 727.5,214.5 734.5,216.5 741.5,219.5 748.5,223.5 755.5,226.5 762.5,229.5 769.5,232.5 776.5,235.5 783.5,236.5 790.5,237.5 797.5,236.5 804.5,234.5 811.5,233.5 818.5,232.5 825.5,230.5 832.5,228.5 839.5,226.5 846.5,224.5 853.5,223.5 860.5,222.5 867.5,221.5 874.5,219.5 881.5,218.5 888.5,217.5 895.5,215.5 902.5,212.5 909.5,209.5 916.5,206.5 923.5,203.5 930.5,201.5 937.5,199.5 944.5,200.5 951.5,201.5 958.5,203.5 965.5,206.5 972.5,208.5 979.5,210.5 986.5,212.5 993.5,214.5 1000.5,218.5 1007.5,222.5 1014.5,226.5 1021.5,230.5 1028.5,234.5 1035.5,239.5 1042.5,246.5 1049.5,256.5 1056.5,266.5 1063.5,278.5 1070.5,288.5 1077.5,297.5 1084.5,304.5 1091.5,310.5 1098.5,315.5 1105.5,321.5 1112.5,325.5 1119.5,330.5 1126.5,335.5 1133.5,339.5 1140.5,341.5 1147.5,342.5 1154.5,343.5 1161.5,344.5 1168.5,345.5 1175.5,346.5 1182.5,345.5 1189.5,344.5 1196.5,341.5 1203.5,339.5 1210.5,337.5 1217.5,335.5 1224.5,332.5 1231.5,329.5 1238.5,326.5 1245.5,323.5 1252.5,321.5 1259.5,319.5 1266.5,317.5 1273.5,315.5 1280.5,313.5 1287.5,312.5 1294.5,310.5 1301.5,307.5" fill="none" stroke="#ff80ff" stroke-width="1" stroke-linejoin="round"/><polyline points="6.5,121.5 13.5,110.5 20.5,101.5 27.5,93.5 34.5,86.5 41.5,79.5 48.5,77.5 55.5,74.5 62.5,71.5 69.5,69.5 76.5,69.5 83.5,71.5 90.5,73.5 97.5,77.5 104.5,83.5 111.5,85.5 118.5,87.5 125.5,92.5 132.5,92.5 139.5,96.5 146.5,100.5 153.5,104.5 160.5,105.5 167.5,107.5 174.5,109.5 181.5,111.5 188.5,115.5 195.5,119.5 202.5,123.5 209.5,126.5 216.5,129.5 223.5,132.5 230.5,136.5 237.5,142.5 244.5,149.5 251.5,155.5 258.5,159.5 265.5,161.5 272.5,161.5 279.5,161.5 286.5,161.5 293.5,162.5 300.5,161.5 307.5,159.5 314.5,155.5 321.5,153.5 328.5,152.5 335.5,152.5 342.5,153.5 349.5,156.5 356.5,157.5 363.5,159.5 370.5,161.5 377.5,163.5 384.5,164.5 391.5,165.5 398.5,164.5 405.5,162.5 412.5,160.5 419.5,157.5 426.5,154.5 433.5,151.5 440.5,147.5 447.5,145.5 454.5,143.5 461.5,141.5 468.5,140.5 475.5,140.5 482.5,140.5 489.5,141.5 496.5,143.5 503.5,146.5 510.5,147.5 517.5,147.5 524.5,148.5 531.5,149.5 538.5,150.5 545.5,152.5 552.5,153.5 559.5,154.5 566.5,156.5 573.5,158.5 580.5,158.5 587.5,159.5 594.5,161.5 601.5,164.5 608.5,168.5 615.5,172.5 622.5,173.5 629.5,175.5 636.5,176.5 643.5,178.5 650.5,182.5 657.5,188.5 664.5,192.5 671.5,197.5 678.5,204.5 685.5,212.5 692.5,220.5 699.5,227.5 706.5,231.5 713.5,234.5 720.5,236.5 727.5,237.5 734.5,238.5 741.5,238.5 748.5,238.5 755.5,238.5 762.5,237.5 769.5,236.5 776.5,236.5 783.5,236.5 790.5,236.5 797.5,235.5 804.5,233.5 811.5,231.5 818.5,228.5 825.5,224.5 832.5,220.5 839.5,217.5 846.5,214.5 853.5,212.5 860.5,211.5 867.5,207.5 874.5,207.5 881.5,208.5 888.5,208.5 895.5,209.5 902.5,207.5 909.5,203.5 916.5,200.5 923.5,197.5 930.5,192.5 937.5,190.5 944.5,190.5 951.5,192.5 958.5,195.5 965.5,200.5 972.5,206.5 979.5,212.5 986.5,220.5 993.5,230.5 1000.5,241.5 1007.5,251.5 1014.5,259.5 1021.5,266.5 1028.5,272.5 1035.5,280.5 1042.5,288.5 1049.5,298.5 1056.5,312.5 1063.5,325.5 1070.5,336.5 1077.5,345.5 1084.5,351.5 1091.5,356.5 1098.5,360.5 1105.5,364.5 1112.5,367.5 1119.5,362.5 1126.5,357.5 1133.5,352.5 1140.5,347.5 1147.5,342.5 1154.5,338.5 1161.5,334.5 1168.5,330.5 1175.5,326.5 1182.5,325.5 1189.5,325.5 1196.5,325.5 1203.5,325.5 1210.5,325.5 1217.5,326.5 1224.5,326.5 1231.5,324.5 1238.5,323.5 1245.5,322.5 1252.5,317.5 1259.5,312.5 1266.5,308.5 1273.5,306.5 1280.5,301.5 1287.5,298.5 1294.5,294.5 1301.5,290.5" fill="none" stroke="#ffff00" stroke-width="1" stroke-linejoin="round"/><polyline points="6.5,96.5 13.5,89.5 20.5,83.5 27.5,77.5 34.5,69.5 41.5,62.5 48.5,68.5 55.5,67.5 62.5,70.5 69.5,75.5 76.5,76.5 83.5,75.5 90.5,84.5 97.5,90.5 104.5,92.5 111.5,95.5 118.5,98.5 125.5,99.5 132.5,102.5 139.5,104.5 146.5,106.5 153.5,108.5 160.5,111.5 167.5,111.5 174.5,112.5 181.5,116.5 188.5,121.5 195.5,128.5 202.5,134.5 209.5,139.5 216.5,143.5 223.5,144.5 230.5,146.5 237.5,152.5 244.5,159.5 251.5,165.5 258.5,170.5 265.5,173.5 272.5,167.5 279.5,160.5 286.5,154.5 293.5,150.5 300.5,149.5 307.5,148.5 314.5,151.5 321.5,151.5 328.5,152.5 335.5,154.5 342.5,156.5 349.5,158.5 356.5,163.5 363.5,167.5 370.5,168.5 377.5,169.5 384.5,168.5 391.5,165.5 398.5,162.5 405.5,158.5 412.5,155.5 419.5,150.5 426.5,146.5 433.5,142.5 440.5,140.5 447.5,141.5 454.5,142.5 461.5,139.5 468.5,138.5 475.5,138.5 482.5,138.5 489.5,141.5 496.5,147.5 503.5,154.5 510.5,158.5 517.5,159.5 524.5,157.5 531.5,154.5 538.5,149.5 545.5,149.5 552.5,150.5 559.5,152.5 566.5,160.5 573.5,167.5 580.5,169.5 587.5,169.5 594.5,170.5 601.5,171.5 608.5,172.5 615.5,174.5 622.5,177.5 629.5,180.5 636.5,184.5 643.5,187.5 650.5,192.5 657.5,198.5 664.5,206.5 671.5,215.5 678.5,224.5 685.5,232.5 692.5,238.5 699.5,243.5 706.5,247.5 713.5,243.5 720.5,238.5 727.5,235.5 734.5,232.5 741.5,229.5 748.5,232.5 755.5,236.5 762.5,239.5 769.5,241.5 776.5,242.5 783.5,240.5 790.5,236.5 797.5,233.5 804.5,223.5 811.5,216.5 818.5,212.5 825.5,208.5 832.5,205.5 839.5,207.5 846.5,209.5 853.5,210.5 860.5,211.5 867.5,209.5 874.5,208.5 881.5,209.5 888.5,210.5 895.5,209.5 902.5,207.5 909.5,201.5 916.5,192.5 923.5,185.5 930.5,176.5 937.5,173.5 944.5,181.5 951.5,192.5 958.5,205.5 965.5,225.5 972.5,239.5 979.5,246.5 986.5,250.5 993.5,253.5 1000.5,257.5 1007.5,266.5 1014.5,275.5 1021.5,282.5 1028.5,289.5 1035.5,297.5 1042.5,307.5 1049.5,322.5 1056.5,337.5 1063.5,352.5 1070.5,364.5 1077.5,372.5 1084.5,371.5 1091.5,367.5 1098.5,362.5 1105.5,362.5 1112.5,360.5 1119.5,356.5 1126.5,350.5 1133.5,345.5 1140.5,337.5 1147.5,327.5 1154.5,319.5 1161.5,317.5 1168.5,316.5 1175.5,317.5 1182.5,327.5 1189.5,332.5 1196.5,334.5 1203.5,334.5 1210.5,332.5 1217.5,322.5 1224.5,319.5 1231.5,314.5 1238.5,311.5 1245.5,311.5 1252.5,311.5 1259.5,307.5 1266.5,302.5 1273.5,300.5 1280.5,293.5 1287.5,283.5 1294.5,280.5 1301.5,277.5" fill="none" stroke="#ffffff" stroke-width="1" stroke-linejoin="round"/></g><polygon points="91.5,18 96,22.5 91.5,27 87,22.5" fill="#3399cc"/><polygon points="126.5,18 131,22.5 126.5,27 122,22.5" fill="#3399cc"/><polygon points="210.5,18 215,22.5 210.5,27 206,22.5" fill="#3399cc"/><polygon points="224.5,18 229,22.5 224.5,27 220,22.5" fill="#3399cc"/><polygon points="546.5,18 551,22.5 546.5,27 542,22.5" fill="#3399cc"/><polygon points="595.5,18 600,22.5 595.5,27 591,22.5" fill="#3399cc"/><polygon points="672.5,18 677,22.5 672.5,27 668,22.5" fill="#3399cc"/><polygon points="812.5,18 817,22.5 812.5,27 808,22.5" fill="#3399cc"/><polygon points="854.5,18 859,22.5 854.5,27 850,22.5" fill="#3399cc"/><polygon points="938.5,18 943,22.5 938.5,27 934,22.5" fill="#3399cc"/><polygon points="952.5,18 957,22.5 952.5,27 948,22.5" fill="#3399cc"/><polygon points="987.5,18 992,22.5 987.5,27 983,22.5" fill="#3399cc"/><polygon points="1050.5,18 1055,22.5 1050.5,27 1046,22.5" fill="#3399cc"/><polygon points="1190.5,18 1195,22.5 1190.5,27 1186,22.5" fill="#3399cc"/><g fill="#c8c8c8"><rect x="16" y="37" width="10" height="1"/><polygon points="13,37.5 17,34.5 16.5,37.5 17,40.5"/></g><g fill="#c8c8c8"><rect x="1059" y="400" width="10" height="1"/><polygon points="1056,400.5 1060,397.5 1059.5,400.5 1060,403.5"/></g><g shape-rendering="crispEdges"><rect x="55" y="442" width="1" height="21" fill="#ffffff"/><rect x="52" y="463" width="6" height="42" fill="#ffffff"/><rect x="265" y="626" width="1" height="4" fill="#ffffff"/><rect x="262" y="600" width="6" height="26" fill="#ffffff"/><rect x="300" y="591" width="1" height="2" fill="#ffffff"/><rect x="297" y="572" width="6" height="19" fill="#ffffff"/><rect x="321" y="576" width="1" height="7" fill="#ffff00"/><rect x="318" y="583" width="6" height="7" fill="#ffff00"/><rect x="384" y="611" width="1" height="3" fill="#ffffff"/><rect x="381" y="600" width="6" height="11" fill="#ffffff"/><rect x="391" y="585" width="1" height="5" fill="#ffff00"/><rect x="388" y="590" width="6" height="8" fill="#ffff00"/><rect x="426" y="569" width="1" height="9" fill="#ffffff"/><rect x="423" y="571" width="7" height="1" fill="#ffffff"/><rect x="454" y="561" width="1" height="8" fill="#ffffff"/><rect x="454" y="581" width="1" height="2" fill="#ffffff"/><rect x="451" y="569" width="6" height="12" fill="#ffffff"/><rect x="531" y="569" width="1" height="3" fill="#ffff00"/><rect x="531" y="584" width="1" height="5" fill="#ffff00"/><rect x="528" y="572" width="6" height="12" fill="#ffff00"/><rect x="783" y="678" width="1" height="8" fill="#ffff00"/><rect x="783" y="705" width="1" height="4" fill="#ffff00"/><rect x="780" y="686" width="6" height="19" fill="#ffff00"/><rect x="860" y="668" width="1" height="3" fill="#ffffff"/><rect x="857" y="654" width="6" height="14" fill="#ffffff"/><rect x="895" y="647" width="1" height="2" fill="#ffff00"/><rect x="895" y="667" width="1" height="7" fill="#ffff00"/><rect x="892" y="649" width="6" height="18" fill="#ffff00"/><rect x="934" y="592" width="6" height="47" fill="#00ff00"/><rect x="1046" y="874" width="6" height="1" fill="#00ff00"/><rect x="1116" y="827" width="6" height="28" fill="#ff0000"/><rect x="1186" y="823" width="6" height="27" fill="#ffff00"/><rect x="1252" y="788" width="1" height="4" fill="#ffffff"/><rect x="1249" y="792" width="6" height="47" fill="#ffffff"/></g><g shape-rendering="crispEdges"><polyline points="5.5,671.5 6.5,671.5 13.5,671.5 20.5,671.5 27.5,670.5 34.5,670.5 41.5,669.5 48.5,669.5 55.5,668.5 62.5,668.5 69.5,667.5 76.5,666.5 83.5,666.5 90.5,665.5 97.5,665.5 104.5,664.5 111.5,664.5 118.5,664.5 125.5,664.5 132.5,663.5 139.5,663.5 146.5,663.5 153.5,662.5 160.5,662.5 167.5,661.5 174.5,661.5 181.5,660.5 188.5,660.5 195.5,659.5 202.5,659.5 209.5,659.5 216.5,659.5 223.5,659.5 230.5,659.5 237.5,659.5 244.5,659.5 251.5,658.5 258.5,658.5 265.5,658.5 272.5,657.5 279.5,657.5 286.5,656.5 293.5,656.5 300.5,656.5 307.5,655.5 314.5,655.5 321.5,655.5 328.5,655.5 335.5,654.5 342.5,654.5 349.5,653.5 356.5,653.5 363.5,652.5 370.5,652.5 377.5,651.5 384.5,650.5 391.5,649.5 398.5,648.5 405.5,647.5 412.5,646.5 419.5,645.5 426.5,644.5 433.5,644.5 440.5,643.5 447.5,642.5 454.5,642.5 461.5,641.5 468.5,640.5 475.5,640.5 482.5,639.5 489.5,638.5 496.5,638.5 503.5,637.5 510.5,636.5 517.5,635.5 524.5,635.5 531.5,634.5 538.5,633.5 545.5,633.5 552.5,632.5 559.5,631.5 566.5,631.5 573.5,630.5 580.5,629.5 587.5,629.5 594.5,628.5 601.5,628.5 608.5,627.5 615.5,626.5 622.5,626.5 629.5,625.5 636.5,625.5 643.5,624.5 650.5,624.5 657.5,623.5 664.5,622.5 671.5,622.5 678.5,621.5 685.5,621.5 692.5,621.5 699.5,620.5 706.5,619.5 713.5,619.5 720.5,618.5 727.5,617.5 734.5,617.5 741.5,617.5 748.5,616.5 755.5,616.5 762.5,616.5 769.5,615.5 776.5,615.5 783.5,614.5 790.5,613.5 797.5,612.5 804.5,612.5 811.5,612.5 818.5,611.5 825.5,611.5 832.5,611.5 839.5,610.5 846.5,610.5 853.5,610.5 860.5,609.5 867.5,609.5 874.5,609.5 881.5,608.5 888.5,608.5 895.5,608.5 902.5,608.5 909.5,608.5 916.5,607.5 923.5,607.5 930.5,607.5 937.5,607.5 944.5,607.5 951.5,607.5 958.5,607.5 965.5,607.5 972.5,607.5 979.5,607.5 986.5,607.5 993.5,608.5 1000.5,608.5 1007.5,608.5 1014.5,608.5 1021.5,609.5 1028.5,609.5 1035.5,609.5 1042.5,610.5 1049.5,610.5 1056.5,611.5 1063.5,612.5 1070.5,612.5 1077.5,613.5 1084.5,614.5 1091.5,615.5 1098.5,615.5 1105.5,616.5 1112.5,616.5 1119.5,617.5 1126.5,617.5 1133.5,618.5 1140.5,618.5 1147.5,618.5 1154.5,618.5 1161.5,618.5 1168.5,618.5 1175.5,618.5 1182.5,618.5 1189.5,618.5 1196.5,618.5 1203.5,618.5 1210.5,618.5 1217.5,618.5 1224.5,618.5 1231.5,618.5 1238.5,618.5 1245.5,618.5 1252.5,618.5 1259.5,618.5 1266.5,618.5 1273.5,618.5 1280.5,618.5 1287.5,618.5 1294.5,618.5 1300.5,618.5" fill="none" stroke="#0000ff" stroke-width="1" stroke-linejoin="round"/><polyline points="5.5,676.5 6.5,676.5 13.5,674.5 20.5,673.5 27.5,672.5 34.5,671.5 41.5,670.5 48.5,669.5 55.5,667.5 62.5,666.5 69.5,665.5 76.5,665.5 83.5,664.5 90.5,663.5 97.5,662.5 104.5,662.5 111.5,661.5 118.5,660.5 125.5,659.5 132.5,658.5 139.5,657.5 146.5,656.5 153.5,654.5 160.5,653.5 167.5,652.5 174.5,652.5 181.5,651.5 188.5,650.5 195.5,649.5 202.5,648.5 209.5,647.5 216.5,646.5 223.5,645.5 230.5,644.5 237.5,643.5 244.5,643.5 251.5,642.5 258.5,641.5 265.5,641.5 272.5,640.5 279.5,639.5 286.5,638.5 293.5,637.5 300.5,637.5 307.5,636.5 314.5,635.5 321.5,634.5 328.5,634.5 335.5,633.5 342.5,632.5 349.5,631.5 356.5,630.5 363.5,629.5 370.5,628.5 377.5,627.5 384.5,626.5 391.5,624.5 398.5,623.5 405.5,622.5 412.5,621.5 419.5,620.5 426.5,619.5 433.5,618.5 440.5,617.5 447.5,617.5 454.5,616.5 461.5,616.5 468.5,615.5 475.5,614.5 482.5,613.5 489.5,612.5 496.5,611.5 503.5,610.5 510.5,608.5 517.5,607.5 524.5,606.5 531.5,605.5 538.5,605.5 545.5,604.5 552.5,603.5 559.5,603.5 566.5,602.5 573.5,601.5 580.5,601.5 587.5,600.5 594.5,600.5 601.5,599.5 608.5,599.5 615.5,598.5 622.5,598.5 629.5,597.5 636.5,597.5 643.5,597.5 650.5,597.5 657.5,597.5 664.5,597.5 671.5,597.5 678.5,597.5 685.5,597.5 692.5,597.5 699.5,597.5 706.5,597.5 713.5,597.5 720.5,597.5 727.5,597.5 734.5,597.5 741.5,598.5 748.5,598.5 755.5,598.5 762.5,598.5 769.5,598.5 776.5,598.5 783.5,598.5 790.5,598.5 797.5,598.5 804.5,598.5 811.5,598.5 818.5,598.5 825.5,598.5 832.5,598.5 839.5,597.5 846.5,597.5 853.5,597.5 860.5,596.5 867.5,596.5 874.5,595.5 881.5,595.5 888.5,595.5 895.5,594.5 902.5,594.5 909.5,593.5 916.5,593.5 923.5,592.5 930.5,592.5 937.5,592.5 944.5,591.5 951.5,591.5 958.5,590.5 965.5,589.5 972.5,589.5 979.5,588.5 986.5,588.5 993.5,588.5 1000.5,588.5 1007.5,588.5 1014.5,588.5 1021.5,588.5 1028.5,588.5 1035.5,588.5 1042.5,588.5 1049.5,588.5 1056.5,589.5 1063.5,589.5 1070.5,590.5 1077.5,591.5 1084.5,591.5 1091.5,591.5 1098.5,592.5 1105.5,592.5 1112.5,593.5 1119.5,594.5 1126.5,594.5 1133.5,595.5 1140.5,595.5 1147.5,596.5 1154.5,597.5 1161.5,597.5 1168.5,598.5 1175.5,599.5 1182.5,600.5 1189.5,601.5 1196.5,602.5 1203.5,602.5 1210.5,603.5 1217.5,604.5 1224.5,605.5 1231.5,606.5 1238.5,607.5 1245.5,608.5 1252.5,609.5 1259.5,610.5 1266.5,611.5 1273.5,612.5 1280.5,612.5 1287.5,613.5 1294.5,614.5 1300.5,615.5" fill="none" stroke="#ff0000" stroke-width="1" stroke-linejoin="round"/><polyline points="5.5,605.5 6.5,605.5 13.5,603.5 20.5,601.5 27.5,600.5 34.5,598.5 41.5,596.5 48.5,595.5 55.5,593.5 62.5,592.5 69.5,591.5 76.5,589.5 83.5,588.5 90.5,586.5 97.5,585.5 104.5,583.5 111.5,581.5 118.5,580.5 125.5,578.5 132.5,576.5 139.5,574.5 146.5,573.5 153.5,571.5 160.5,570.5 167.5,569.5 174.5,568.5 181.5,567.5 188.5,566.5 195.5,564.5 202.5,563.5 209.5,561.5 216.5,560.5 223.5,559.5 230.5,558.5 237.5,557.5 244.5,556.5 251.5,554.5 258.5,553.5 265.5,552.5 272.5,550.5 279.5,549.5 286.5,547.5 293.5,545.5 300.5,544.5 307.5,543.5 314.5,541.5 321.5,540.5 328.5,539.5 335.5,538.5 342.5,537.5 349.5,537.5 356.5,536.5 363.5,535.5 370.5,535.5 377.5,534.5 384.5,534.5 391.5,533.5 398.5,532.5 405.5,531.5 412.5,531.5 419.5,530.5 426.5,529.5 433.5,529.5 440.5,528.5 447.5,528.5 454.5,528.5 461.5,527.5 468.5,527.5 475.5,528.5 482.5,529.5 489.5,529.5 496.5,530.5 503.5,530.5 510.5,530.5 517.5,530.5 524.5,530.5 531.5,531.5 538.5,531.5 545.5,532.5 552.5,532.5 559.5,533.5 566.5,533.5 573.5,534.5 580.5,535.5 587.5,536.5 594.5,537.5 601.5,538.5 608.5,539.5 615.5,541.5 622.5,542.5 629.5,543.5 636.5,545.5 643.5,547.5 650.5,548.5 657.5,550.5 664.5,552.5 671.5,554.5 678.5,555.5 685.5,557.5 692.5,559.5 699.5,562.5 706.5,564.5 713.5,567.5 720.5,568.5 727.5,570.5 734.5,571.5 741.5,572.5 748.5,574.5 755.5,575.5 762.5,577.5 769.5,578.5 776.5,579.5 783.5,580.5 790.5,581.5 797.5,582.5 804.5,583.5 811.5,583.5 818.5,584.5 825.5,585.5 832.5,586.5 839.5,588.5 846.5,590.5 853.5,591.5 860.5,592.5 867.5,592.5 874.5,593.5 881.5,594.5 888.5,595.5 895.5,596.5 902.5,597.5 909.5,597.5 916.5,597.5 923.5,597.5 930.5,598.5 937.5,599.5 944.5,600.5 951.5,601.5 958.5,601.5 965.5,602.5 972.5,603.5 979.5,604.5 986.5,605.5 993.5,607.5 1000.5,608.5 1007.5,610.5 1014.5,613.5 1021.5,615.5 1028.5,618.5 1035.5,620.5 1042.5,622.5 1049.5,624.5 1056.5,626.5 1063.5,629.5 1070.5,631.5 1077.5,634.5 1084.5,637.5 1091.5,640.5 1098.5,643.5 1105.5,645.5 1112.5,647.5 1119.5,649.5 1126.5,651.5 1133.5,653.5 1140.5,655.5 1147.5,657.5 1154.5,658.5 1161.5,660.5 1168.5,662.5 1175.5,664.5 1182.5,666.5 1189.5,668.5 1196.5,670.5 1203.5,672.5 1210.5,673.5 1217.5,675.5 1224.5,677.5 1231.5,678.5 1238.5,680.5 1245.5,681.5 1252.5,682.5 1259.5,683.5 1266.5,685.5 1273.5,686.5 1280.5,687.5 1287.5,688.5 1294.5,689.5 1300.5,690.5" fill="none" stroke="#00ff00" stroke-width="1" stroke-linejoin="round"/><polyline points="5.5,500.5 6.5,500.5 13.5,500.5 20.5,500.5 27.5,501.5 34.5,502.5 41.5,503.5 48.5,504.5 55.5,506.5 62.5,507.5 69.5,509.5 76.5,510.5 83.5,512.5 90.5,513.5 97.5,514.5 104.5,515.5 111.5,516.5 118.5,517.5 125.5,518.5 132.5,518.5 139.5,519.5 146.5,520.5 153.5,521.5 160.5,522.5 167.5,522.5 174.5,522.5 181.5,522.5 188.5,522.5 195.5,523.5 202.5,525.5 209.5,527.5 216.5,529.5 223.5,531.5 230.5,534.5 237.5,535.5 244.5,536.5 251.5,537.5 258.5,538.5 265.5,538.5 272.5,539.5 279.5,541.5 286.5,542.5 293.5,543.5 300.5,543.5 307.5,543.5 314.5,543.5 321.5,543.5 328.5,543.5 335.5,544.5 342.5,544.5 349.5,545.5 356.5,547.5 363.5,549.5 370.5,550.5 377.5,552.5 384.5,553.5 391.5,555.5 398.5,557.5 405.5,558.5 412.5,560.5 419.5,562.5 426.5,564.5 433.5,566.5 440.5,568.5 447.5,569.5 454.5,570.5 461.5,571.5 468.5,573.5 475.5,574.5 482.5,575.5 489.5,577.5 496.5,578.5 503.5,579.5 510.5,581.5 517.5,582.5 524.5,583.5 531.5,584.5 538.5,585.5 545.5,586.5 552.5,587.5 559.5,588.5 566.5,589.5 573.5,590.5 580.5,590.5 587.5,591.5 594.5,592.5 601.5,592.5 608.5,593.5 615.5,593.5 622.5,594.5 629.5,594.5 636.5,595.5 643.5,595.5 650.5,596.5 657.5,597.5 664.5,598.5 671.5,599.5 678.5,602.5 685.5,605.5 692.5,608.5 699.5,610.5 706.5,612.5 713.5,614.5 720.5,616.5 727.5,618.5 734.5,620.5 741.5,622.5 748.5,624.5 755.5,626.5 762.5,628.5 769.5,630.5 776.5,632.5 783.5,633.5 790.5,635.5 797.5,637.5 804.5,638.5 811.5,639.5 818.5,640.5 825.5,642.5 832.5,643.5 839.5,645.5 846.5,647.5 853.5,649.5 860.5,651.5 867.5,652.5 874.5,653.5 881.5,655.5 888.5,656.5 895.5,658.5 902.5,659.5 909.5,659.5 916.5,659.5 923.5,660.5 930.5,660.5 937.5,661.5 944.5,662.5 951.5,663.5 958.5,665.5 965.5,667.5 972.5,669.5 979.5,670.5 986.5,672.5 993.5,674.5 1000.5,676.5 1007.5,678.5 1014.5,681.5 1021.5,683.5 1028.5,686.5 1035.5,690.5 1042.5,694.5 1049.5,697.5 1056.5,700.5 1063.5,703.5 1070.5,706.5 1077.5,709.5 1084.5,713.5 1091.5,716.5 1098.5,720.5 1105.5,723.5 1112.5,725.5 1119.5,727.5 1126.5,729.5 1133.5,731.5 1140.5,732.5 1147.5,734.5 1154.5,735.5 1161.5,737.5 1168.5,739.5 1175.5,742.5 1182.5,745.5 1189.5,749.5 1196.5,753.5 1203.5,756.5 1210.5,758.5 1217.5,761.5 1224.5,763.5 1231.5,765.5 1238.5,767.5 1245.5,769.5 1252.5,771.5 1259.5,773.5 1266.5,775.5 1273.5,776.5 1280.5,778.5 1287.5,781.5 1294.5,783.5 1301.5,785.5" fill="none" stroke="#ff00ff" stroke-width="1" stroke-linejoin="round"/><polyline points="5.5,548.5 6.5,548.5 13.5,545.5 20.5,541.5 27.5,537.5 34.5,532.5 41.5,527.5 48.5,524.5 55.5,520.5 62.5,516.5 69.5,511.5 76.5,505.5 83.5,500.5 90.5,495.5 97.5,494.5 104.5,494.5 111.5,494.5 118.5,494.5 125.5,494.5 132.5,495.5 139.5,499.5 146.5,502.5 153.5,506.5 160.5,509.5 167.5,513.5 174.5,517.5 181.5,521.5 188.5,525.5 195.5,530.5 202.5,535.5 209.5,539.5 216.5,543.5 223.5,546.5 230.5,550.5 237.5,556.5 244.5,562.5 251.5,569.5 258.5,573.5 265.5,575.5 272.5,577.5 279.5,581.5 286.5,584.5 293.5,586.5 300.5,588.5 307.5,589.5 314.5,590.5 321.5,590.5 328.5,591.5 335.5,591.5 342.5,592.5 349.5,595.5 356.5,597.5 363.5,597.5 370.5,596.5 377.5,595.5 384.5,594.5 391.5,594.5 398.5,593.5 405.5,593.5 412.5,592.5 419.5,592.5 426.5,592.5 433.5,591.5 440.5,591.5 447.5,590.5 454.5,589.5 461.5,587.5 468.5,585.5 475.5,584.5 482.5,581.5 489.5,579.5 496.5,578.5 503.5,578.5 510.5,578.5 517.5,578.5 524.5,579.5 531.5,579.5 538.5,579.5 545.5,580.5 552.5,581.5 559.5,582.5 566.5,585.5 573.5,587.5 580.5,590.5 587.5,593.5 594.5,596.5 601.5,599.5 608.5,601.5 615.5,603.5 622.5,605.5 629.5,606.5 636.5,608.5 643.5,611.5 650.5,615.5 657.5,621.5 664.5,628.5 671.5,634.5 678.5,639.5 685.5,644.5 692.5,649.5 699.5,656.5 706.5,661.5 713.5,664.5 720.5,667.5 727.5,671.5 734.5,674.5 741.5,678.5 748.5,682.5 755.5,686.5 762.5,690.5 769.5,695.5 776.5,698.5 783.5,700.5 790.5,700.5 797.5,699.5 804.5,697.5 811.5,693.5 818.5,689.5 825.5,686.5 832.5,684.5 839.5,684.5 846.5,683.5 853.5,682.5 860.5,680.5 867.5,679.5 874.5,676.5 881.5,674.5 888.5,671.5 895.5,667.5 902.5,664.5 909.5,661.5 916.5,657.5 923.5,652.5 930.5,649.5 937.5,648.5 944.5,649.5 951.5,652.5 958.5,654.5 965.5,656.5 972.5,658.5 979.5,661.5 986.5,664.5 993.5,668.5 1000.5,673.5 1007.5,679.5 1014.5,686.5 1021.5,693.5 1028.5,700.5 1035.5,711.5 1042.5,726.5 1049.5,736.5 1056.5,751.5 1063.5,767.5 1070.5,777.5 1077.5,785.5 1084.5,795.5 1091.5,806.5 1098.5,815.5 1105.5,822.5 1112.5,828.5 1119.5,834.5 1126.5,838.5 1133.5,840.5 1140.5,842.5 1147.5,843.5 1154.5,844.5 1161.5,844.5 1168.5,843.5 1175.5,839.5 1182.5,836.5 1189.5,833.5 1196.5,831.5 1203.5,827.5 1210.5,823.5 1217.5,820.5 1224.5,816.5 1231.5,812.5 1238.5,810.5 1245.5,809.5 1252.5,808.5 1259.5,806.5 1266.5,803.5 1273.5,801.5 1280.5,799.5 1287.5,796.5 1294.5,792.5 1301.5,787.5 1301.5,787.5" fill="none" stroke="#ffff00" stroke-width="1" stroke-linejoin="round"/></g><g shape-rendering="crispEdges"><polyline points="6.5,520.0 13.5,508.0 20.5,499.0 27.5,491.0 34.5,482.0 41.5,475.0 48.5,474.0 55.5,474.0 62.5,476.0 69.5,480.0 76.5,486.0 83.5,489.0 90.5,492.0 97.5,501.0 104.5,507.0 111.5,511.0 118.5,515.0 125.5,518.0 132.5,520.0 139.5,523.0 146.5,526.0 153.5,529.0 160.5,531.0 167.5,534.0 174.5,537.0 181.5,541.0 188.5,547.0 195.5,554.0 202.5,561.0 209.5,569.0 216.5,574.0 223.5,577.0 230.5,579.0 237.5,585.0 244.5,592.0 251.5,600.0 258.5,607.0 265.5,610.0 272.5,609.0 279.5,601.0 286.5,598.0 293.5,592.0 300.5,585.0 307.5,583.0 314.5,583.0 321.5,584.0 328.5,585.0 335.5,588.0 342.5,592.0 349.5,596.0 356.5,600.0 363.5,604.0 370.5,606.0 377.5,607.0 384.5,607.0 391.5,604.0 398.5,599.0 405.5,593.0 412.5,588.0 419.5,584.0 426.5,579.0 433.5,574.0 440.5,574.0 447.5,574.0 454.5,573.0 461.5,570.0 468.5,569.0 475.5,571.0 482.5,571.0 489.5,571.0 496.5,576.0 503.5,583.0 510.5,590.0 517.5,593.0 524.5,593.0 531.5,590.0 538.5,587.0 545.5,586.0 552.5,587.0 559.5,590.0 566.5,596.0 573.5,602.0 580.5,606.0 587.5,610.0 594.5,613.0 601.5,613.0 608.5,613.0 615.5,617.0 622.5,621.0 629.5,624.0 636.5,627.0 643.5,631.0 650.5,639.0 657.5,648.0 664.5,656.0 671.5,665.0 678.5,675.0 685.5,686.0 692.5,697.0 699.5,704.0 706.5,708.0 713.5,706.0 720.5,703.0 727.5,698.0 734.5,694.0 741.5,691.0 748.5,691.0 755.5,694.0 762.5,699.0 769.5,702.0 776.5,704.0 783.5,704.0 790.5,702.0 797.5,697.0 804.5,688.0 811.5,678.0 818.5,670.0 825.5,665.0 832.5,661.0 839.5,660.0 846.5,662.0 853.5,662.0 860.5,663.0 867.5,663.0 874.5,662.0 881.5,661.0 888.5,662.0 895.5,662.0 902.5,659.0 909.5,652.0 916.5,644.0 923.5,638.0 930.5,622.0 937.5,620.0 944.5,626.0 951.5,638.0 958.5,651.0 965.5,668.0 972.5,689.0 979.5,704.0 986.5,711.0 993.5,717.0 1000.5,724.0 1007.5,733.0 1014.5,742.0 1021.5,751.0 1028.5,760.0 1035.5,774.0 1042.5,792.0 1049.5,808.0 1056.5,827.0 1063.5,845.0 1070.5,859.0 1077.5,869.0 1084.5,875.0 1091.5,874.0 1098.5,866.0 1105.5,863.0 1112.5,862.0 1119.5,856.0 1126.5,849.0 1133.5,841.0 1140.5,832.0 1147.5,819.0 1154.5,809.0 1161.5,807.0 1168.5,806.0 1175.5,806.0 1182.5,811.0 1189.5,820.0 1196.5,823.0 1203.5,823.0 1210.5,822.0 1217.5,817.0 1224.5,811.0 1231.5,803.0 1238.5,799.0 1245.5,796.0 1252.5,795.0 1259.5,793.0 1266.5,787.0 1273.5,785.0 1280.5,777.0 1287.5,765.0 1294.5,758.0 1301.5,753.0 1301.5,752.0" fill="none" stroke="#ff0000" stroke-width="2" stroke-linejoin="round"/></g></svg>
<div class="t" style="left:26px;top:1px;color:#d4d4d4;letter-spacing:0">(</div>
<div class="t" style="left:54px;top:1px;color:#d4d4d4;letter-spacing:0">)</div>
<div class="t" style="left:118px;top:1px;color:#e8e8f8">MA5: 6.79</div>
<div class="t" style="left:188px;top:1px;color:#ffff00">MA10: 6.56</div>
<div class="t" style="left:265px;top:1px;color:#ff80ff">MA20: 6.25</div>
<div class="t" style="left:342px;top:1px;color:#00e600">MA30: 6.09</div>
<div class="t" style="left:419px;top:1px;color:#00d2f0">MA60: 6.48</div>
<svg style="position:absolute;left:174px;top:2px" width="6" height="11"><polygon points="3,0 6,5 4,4.5 4,11 2,11 2,4.5 0,5" fill="#ff3232"/></svg>
<svg style="position:absolute;left:251px;top:2px" width="6" height="11"><polygon points="3,0 6,5 4,4.5 4,11 2,11 2,4.5 0,5" fill="#ff3232"/></svg>
<svg style="position:absolute;left:328px;top:2px" width="6" height="11"><polygon points="3,0 6,5 4,4.5 4,11 2,11 2,4.5 0,5" fill="#ff3232"/></svg>
<svg style="position:absolute;left:405px;top:2px" width="6" height="11"><polygon points="3,0 6,5 4,4.5 4,11 2,11 2,4.5 0,5" fill="#ff3232"/></svg>
<svg style="position:absolute;left:482px;top:2px" width="6" height="11"><polygon points="3,11 6,6 4,6.5 4,0 2,0 2,6.5 0,6" fill="#54fcfc"/></svg>
<div class="btn" style="left:1112px;width:44px;height:17px"></div>
<div class="btn" style="left:1154px;width:33px;height:17px"></div>
<div class="btn" style="left:1185px;width:33px;height:17px"></div>
<div class="btn" style="left:1216px;width:21px;height:17px"></div>
<div class="btn" style="left:1235px;width:21px;height:17px"></div>
<div class="btn" style="left:1254px;width:33px;height:17px"></div>
<div class="btn" style="left:1285px;width:21px;height:17px"></div>
<div class="btn" style="left:1304px;width:17px;height:17px"></div>
<svg style="position:absolute;left:1288px;top:2px" width="14" height="12"><polygon points="0,4 5,4 5,0.5 10,6 5,11.5 5,8 0,8" fill="#d0d0d0"/><rect x="10.5" y="1" width="2" height="10" fill="#d0d0d0"/></svg>
<svg style="position:absolute;left:1307px;top:5px" width="9" height="6"><polygon points="0,0 7,0 3.5,4" fill="#d0d0d0"/></svg>
<div class="ax" style="top:13px">11.38</div>
<div class="ax" style="top:93px">9.97</div>
<div class="ax" style="top:174px">8.53</div>
<div class="ax" style="top:254px">7.11</div>
<div class="ax" style="top:335px">5.68</div>
<div class="ax" style="top:437px">+10.97</div>
<div class="ax" style="top:478px">+10.41</div>
<div class="ax" style="top:519px">+9.86</div>
<div class="ax" style="top:561px">+9.30</div>
<div class="ax" style="top:602px">+8.74</div>
<div class="ax" style="top:643px">+8.18</div>
<div class="ax" style="top:684px">+7.63</div>
<div class="ax" style="top:725px">+7.07</div>
<div class="ax" style="top:767px">+6.51</div>
<div class="ax" style="top:808px">+5.95</div>
<div class="ax" style="top:849px">+5.40</div>
<div class="t" style="left:29px;top:31px;color:#c8c8c8">11.03</div>
<div class="t" style="left:1070px;top:394px;color:#c8c8c8">4.60</div>
<div style="position:absolute;left:115px;top:403px;width:13px;height:14px;background:#6a0000"></div>
<div style="position:absolute;left:112px;top:406px;width:13px;height:14px;box-sizing:border-box;border:1px solid #ff0000;background:#000;color:#ff3030;font-size:14px;line-height:11px;font-weight:bold;text-align:center;font-family:'Liberation Serif',serif">q</div>
<div class="lab" style="left:588px"></div>
<div class="lab" style="left:945px"></div>
<div class="lab" style="left:1113px"></div>
<div class="t" style="left:103px;top:425px;color:#ff0000">EMA250: +8.61</div>
<svg style="position:absolute;left:185px;top:427px" width="6" height="11"><polygon points="3,11 6,6 4,6.5 4,0 2,0 2,6.5 0,6" fill="#54fcfc"/></svg>
<div class="t" style="left:202px;top:425px;color:#ff0000">EMA6: +6.77</div>
<svg style="position:absolute;left:271px;top:427px" width="6" height="11"><polygon points="3,0 6,5 4,4.5 4,11 2,11 2,4.5 0,5" fill="#ff3232"/></svg>
<div class="t" style="left:287px;top:425px;color:#ffff00">EMA18: +6.29</div>
<svg style="position:absolute;left:363px;top:427px" width="6" height="11"><polygon points="3,0 6,5 4,4.5 4,11 2,11 2,4.5 0,5" fill="#ff3232"/></svg>
<div class="t" style="left:378px;top:425px;color:#ff00ff">EMA55: +6.32</div>
<svg style="position:absolute;left:455px;top:427px" width="6" height="11"><polygon points="3,11 6,6 4,6.5 4,0 2,0 2,6.5 0,6" fill="#54fcfc"/></svg>
<div class="t" style="left:471px;top:425px;color:#00ff00">EMA144: +7.60</div>
<svg style="position:absolute;left:555px;top:427px" width="6" height="11"><polygon points="3,11 6,6 4,6.5 4,0 2,0 2,6.5 0,6" fill="#54fcfc"/></svg>
<div class="t" style="left:569px;top:425px;color:#0000ff">EMA288: +8.58</div>
<svg style="position:absolute;left:654px;top:427px" width="6" height="11"><polygon points="3,0 6,5 4,4.5 4,11 2,11 2,4.5 0,5" fill="#ff3232"/></svg>
<div class="btn" style="left:1253px;top:421px;width:67px;height:20px;line-height:20px;border-top:none"></div>
<div class="ax" style="left:4px;top:900px">06</div>
<div class="ax" style="left:78px;top:900px">07</div>
<div class="ax" style="left:218px;top:900px">08</div>
<div class="ax" style="left:372px;top:900px">09</div>
<div class="ax" style="left:512px;top:900px">10</div>
<div class="ax" style="left:638px;top:900px">11</div>
<div class="ax" style="left:785px;top:900px">12</div>
<div class="ax" style="left:939px;top:900px">01</div>
<div class="ax" style="left:1051px;top:900px">02</div>
<div class="ax" style="left:1191px;top:900px">03</div>
<svg style="position:absolute;left:272px;top:629px" width="12" height="20" shape-rendering="crispEdges"><rect x="0" y="5" width="11" height="1" fill="#ff0000"/><rect x="3" y="3" width="1" height="16" fill="#ff0000"/><rect x="2" y="4" width="3" height="3" fill="#ff0000"/><rect x="4" y="3" width="1" height="1" fill="#ff0000"/><rect x="5" y="2" width="1" height="1" fill="#ff0000"/></svg>
<svg style="position:absolute;left:713px;top:719px" width="12" height="20" shape-rendering="crispEdges"><rect x="0" y="5" width="11" height="1" fill="#ff0000"/><rect x="3" y="3" width="1" height="16" fill="#ff0000"/><rect x="2" y="4" width="3" height="3" fill="#ff0000"/><rect x="4" y="3" width="1" height="1" fill="#ff0000"/><rect x="5" y="2" width="1" height="1" fill="#ff0000"/></svg>
<svg style="position:absolute;left:1070px;top:884px" width="12" height="20" shape-rendering="crispEdges"><rect x="0" y="5" width="11" height="1" fill="#ff0000"/><rect x="3" y="3" width="1" height="9" fill="#ff0000"/><rect x="2" y="4" width="3" height="3" fill="#ff0000"/><rect x="4" y="3" width="1" height="1" fill="#ff0000"/><rect x="5" y="2" width="1" height="1" fill="#ff0000"/></svg>
<svg style="position:absolute;left:0;top:0" width="1372" height="906" shape-rendering="crispEdges"><path d="M16 3h1v1h-1zM20 3h1v1h-1zM22 3h1v1h-1zM4 4h7v1h-7zM16 4h1v1h-1zM20 4h1v1h-1zM23 4h1v1h-1zM4 5h1v1h-1zM10 5h1v1h-1zM15 5h1v1h-1zM20 5h4v1h-4zM4 6h1v1h-1zM10 6h1v1h-1zM15 6h1v1h-1zM18 6h3v1h-3zM4 7h1v1h-1zM10 7h1v1h-1zM14 7h3v1h-3zM20 7h5v1h-5zM4 8h7v1h-7zM16 8h1v1h-1zM18 8h3v1h-3zM4 9h1v1h-1zM10 9h1v1h-1zM15 9h1v1h-1zM20 9h1v1h-1zM23 9h1v1h-1zM4 10h1v1h-1zM10 10h1v1h-1zM14 10h4v1h-4zM20 10h1v1h-1zM22 10h1v1h-1zM4 11h1v1h-1zM10 11h1v1h-1zM18 11h1v1h-1zM21 11h1v1h-1zM24 11h1v1h-1zM4 12h7v1h-7zM16 12h2v1h-2zM20 12h1v1h-1zM22 12h1v1h-1zM24 12h1v1h-1zM4 13h1v1h-1zM10 13h1v1h-1zM14 13h2v1h-2zM18 13h2v1h-2zM23 13h2v1h-2z" fill="#d4d4d4"/><path d="M33 3h1v1h-1zM45 3h1v1h-1zM33 4h9v1h-9zM45 4h1v1h-1zM47 4h6v1h-6zM32 5h2v1h-2zM39 5h1v1h-1zM43 5h4v1h-4zM48 5h1v1h-1zM52 5h1v1h-1zM31 6h1v1h-1zM33 6h7v1h-7zM45 6h1v1h-1zM48 6h1v1h-1zM52 6h1v1h-1zM33 7h1v1h-1zM39 7h1v1h-1zM45 7h1v1h-1zM48 7h1v1h-1zM52 7h1v1h-1zM33 8h7v1h-7zM44 8h3v1h-3zM49 8h1v1h-1zM51 8h1v1h-1zM34 9h1v1h-1zM44 9h2v1h-2zM47 9h1v1h-1zM49 9h1v1h-1zM51 9h1v1h-1zM33 10h7v1h-7zM43 10h1v1h-1zM45 10h1v1h-1zM50 10h1v1h-1zM31 11h2v1h-2zM35 11h1v1h-1zM38 11h1v1h-1zM45 11h1v1h-1zM49 11h1v1h-1zM51 11h1v1h-1zM36 12h2v1h-2zM45 12h1v1h-1zM48 12h1v1h-1zM52 12h1v1h-1zM31 13h5v1h-5zM38 13h4v1h-4zM45 13h1v1h-1zM47 13h1v1h-1zM53 13h1v1h-1z" fill="#d4d4d4"/><path d="M69 2h1v1h-1zM75 2h2v1h-2zM84 2h1v1h-1zM92 2h1v1h-1zM96 2h1v1h-1zM102 2h1v1h-1zM108 2h1v1h-1zM66 3h6v1h-6zM73 3h2v1h-2zM79 3h10v1h-10zM90 3h1v1h-1zM92 3h1v1h-1zM96 3h1v1h-1zM103 3h1v1h-1zM105 3h8v1h-8zM67 4h1v1h-1zM71 4h1v1h-1zM73 4h1v1h-1zM79 4h1v1h-1zM88 4h1v1h-1zM90 4h1v1h-1zM92 4h1v1h-1zM95 4h6v1h-6zM107 4h1v1h-1zM68 5h1v1h-1zM70 5h1v1h-1zM73 5h1v1h-1zM90 5h5v1h-5zM96 5h1v1h-1zM98 5h1v1h-1zM100 5h1v1h-1zM102 5h1v1h-1zM106 5h1v1h-1zM110 5h1v1h-1zM66 6h6v1h-6zM73 6h4v1h-4zM79 6h10v1h-10zM90 6h1v1h-1zM92 6h1v1h-1zM96 6h1v1h-1zM98 6h1v1h-1zM100 6h1v1h-1zM103 6h1v1h-1zM105 6h7v1h-7zM69 7h1v1h-1zM73 7h1v1h-1zM75 7h1v1h-1zM84 7h1v1h-1zM92 7h2v1h-2zM96 7h1v1h-1zM98 7h1v1h-1zM100 7h1v1h-1zM104 7h1v1h-1zM111 7h1v1h-1zM66 8h6v1h-6zM73 8h1v1h-1zM75 8h1v1h-1zM84 8h1v1h-1zM91 8h2v1h-2zM95 8h1v1h-1zM98 8h1v1h-1zM100 8h1v1h-1zM104 8h1v1h-1zM106 8h1v1h-1zM108 8h1v1h-1zM110 8h1v1h-1zM69 9h1v1h-1zM73 9h1v1h-1zM75 9h1v1h-1zM84 9h1v1h-1zM90 9h1v1h-1zM92 9h1v1h-1zM94 9h1v1h-1zM97 9h1v1h-1zM100 9h1v1h-1zM102 9h2v1h-2zM106 9h1v1h-1zM108 9h1v1h-1zM110 9h1v1h-1zM67 10h1v1h-1zM69 10h1v1h-1zM71 10h1v1h-1zM73 10h1v1h-1zM75 10h1v1h-1zM84 10h1v1h-1zM92 10h1v1h-1zM96 10h1v1h-1zM100 10h1v1h-1zM103 10h1v1h-1zM106 10h1v1h-1zM108 10h1v1h-1zM110 10h1v1h-1zM112 10h1v1h-1zM66 11h1v1h-1zM69 11h1v1h-1zM72 11h1v1h-1zM75 11h1v1h-1zM84 11h1v1h-1zM92 11h1v1h-1zM95 11h1v1h-1zM97 11h1v1h-1zM100 11h1v1h-1zM103 11h1v1h-1zM106 11h1v1h-1zM108 11h1v1h-1zM110 11h1v1h-1zM112 11h1v1h-1zM68 12h2v1h-2zM71 12h1v1h-1zM75 12h1v1h-1zM82 12h3v1h-3zM92 12h1v1h-1zM94 12h1v1h-1zM98 12h2v1h-2zM103 12h1v1h-1zM105 12h1v1h-1zM108 12h1v1h-1zM111 12h2v1h-2z" fill="#ffffff"/><path d="M1115 3h3v1h-3zM1119 3h3v1h-3zM1125 3h1v1h-1zM1131 3h1v1h-1zM1140 3h1v1h-1zM1144 3h1v1h-1zM1146 3h1v1h-1zM1115 4h1v1h-1zM1117 4h1v1h-1zM1119 4h1v1h-1zM1121 4h1v1h-1zM1123 4h1v1h-1zM1125 4h1v1h-1zM1129 4h7v1h-7zM1141 4h1v1h-1zM1144 4h1v1h-1zM1146 4h1v1h-1zM1115 5h1v1h-1zM1117 5h1v1h-1zM1119 5h1v1h-1zM1121 5h1v1h-1zM1123 5h1v1h-1zM1125 5h1v1h-1zM1129 5h1v1h-1zM1135 5h1v1h-1zM1141 5h1v1h-1zM1144 5h5v1h-5zM1115 6h1v1h-1zM1117 6h1v1h-1zM1119 6h1v1h-1zM1121 6h1v1h-1zM1123 6h1v1h-1zM1125 6h1v1h-1zM1129 6h1v1h-1zM1135 6h1v1h-1zM1143 6h1v1h-1zM1146 6h1v1h-1zM1115 7h9v1h-9zM1125 7h1v1h-1zM1129 7h7v1h-7zM1139 7h3v1h-3zM1143 7h7v1h-7zM1115 8h1v1h-1zM1117 8h1v1h-1zM1119 8h1v1h-1zM1121 8h1v1h-1zM1123 8h1v1h-1zM1125 8h1v1h-1zM1129 8h1v1h-1zM1135 8h1v1h-1zM1141 8h1v1h-1zM1145 8h1v1h-1zM1147 8h1v1h-1zM1115 9h1v1h-1zM1117 9h1v1h-1zM1119 9h1v1h-1zM1121 9h1v1h-1zM1123 9h1v1h-1zM1125 9h1v1h-1zM1129 9h7v1h-7zM1141 9h1v1h-1zM1145 9h1v1h-1zM1147 9h1v1h-1zM1149 9h1v1h-1zM1115 10h1v1h-1zM1117 10h1v1h-1zM1119 10h1v1h-1zM1121 10h1v1h-1zM1123 10h1v1h-1zM1125 10h1v1h-1zM1129 10h1v1h-1zM1135 10h1v1h-1zM1141 10h1v1h-1zM1144 10h1v1h-1zM1147 10h1v1h-1zM1149 10h1v1h-1zM1115 11h1v1h-1zM1117 11h1v1h-1zM1119 11h1v1h-1zM1121 11h1v1h-1zM1125 11h1v1h-1zM1129 11h1v1h-1zM1135 11h1v1h-1zM1141 11h1v1h-1zM1143 11h1v1h-1zM1148 11h2v1h-2zM1115 12h1v1h-1zM1117 12h1v1h-1zM1119 12h1v1h-1zM1121 12h1v1h-1zM1125 12h1v1h-1zM1129 12h7v1h-7zM1140 12h1v1h-1zM1142 12h1v1h-1zM1115 13h1v1h-1zM1117 13h2v1h-2zM1120 13h2v1h-2zM1123 13h3v1h-3zM1129 13h1v1h-1zM1135 13h1v1h-1zM1139 13h1v1h-1zM1143 13h7v1h-7z" fill="#e0e0e0"/><path d="M1159 3h1v1h-1zM1163 3h1v1h-1zM1171 3h1v1h-1zM1175 3h1v1h-1zM1177 3h1v1h-1zM1159 4h1v1h-1zM1163 4h1v1h-1zM1171 4h1v1h-1zM1175 4h1v1h-1zM1178 4h1v1h-1zM1159 5h1v1h-1zM1162 5h6v1h-6zM1170 5h1v1h-1zM1175 5h4v1h-4zM1157 6h4v1h-4zM1167 6h1v1h-1zM1170 6h1v1h-1zM1173 6h3v1h-3zM1159 7h1v1h-1zM1162 7h1v1h-1zM1167 7h1v1h-1zM1169 7h3v1h-3zM1175 7h5v1h-5zM1159 8h1v1h-1zM1163 8h1v1h-1zM1167 8h1v1h-1zM1171 8h1v1h-1zM1173 8h3v1h-3zM1159 9h1v1h-1zM1161 9h1v1h-1zM1165 9h1v1h-1zM1167 9h1v1h-1zM1170 9h1v1h-1zM1175 9h1v1h-1zM1178 9h1v1h-1zM1159 10h2v1h-2zM1164 10h1v1h-1zM1167 10h1v1h-1zM1169 10h4v1h-4zM1175 10h1v1h-1zM1177 10h1v1h-1zM1157 11h2v1h-2zM1162 11h2v1h-2zM1167 11h1v1h-1zM1173 11h1v1h-1zM1176 11h1v1h-1zM1179 11h1v1h-1zM1167 12h1v1h-1zM1171 12h2v1h-2zM1175 12h1v1h-1zM1177 12h1v1h-1zM1179 12h1v1h-1zM1165 13h2v1h-2zM1169 13h2v1h-2zM1173 13h2v1h-2zM1178 13h2v1h-2z" fill="#e0e0e0"/><path d="M1190 3h1v1h-1zM1202 3h1v1h-1zM1190 4h9v1h-9zM1202 4h1v1h-1zM1204 4h6v1h-6zM1189 5h2v1h-2zM1196 5h1v1h-1zM1200 5h4v1h-4zM1205 5h1v1h-1zM1209 5h1v1h-1zM1188 6h1v1h-1zM1190 6h7v1h-7zM1202 6h1v1h-1zM1205 6h1v1h-1zM1209 6h1v1h-1zM1190 7h1v1h-1zM1196 7h1v1h-1zM1202 7h1v1h-1zM1205 7h1v1h-1zM1209 7h1v1h-1zM1190 8h7v1h-7zM1201 8h3v1h-3zM1206 8h1v1h-1zM1208 8h1v1h-1zM1191 9h1v1h-1zM1201 9h2v1h-2zM1204 9h1v1h-1zM1206 9h1v1h-1zM1208 9h1v1h-1zM1190 10h7v1h-7zM1200 10h1v1h-1zM1202 10h1v1h-1zM1207 10h1v1h-1zM1188 11h2v1h-2zM1192 11h1v1h-1zM1195 11h1v1h-1zM1202 11h1v1h-1zM1206 11h1v1h-1zM1208 11h1v1h-1zM1193 12h2v1h-2zM1202 12h1v1h-1zM1205 12h1v1h-1zM1209 12h1v1h-1zM1188 13h5v1h-5zM1195 13h4v1h-4zM1202 13h1v1h-1zM1204 13h1v1h-1zM1210 13h1v1h-1z" fill="#e0e0e0"/><path d="M1222 3h7v1h-7zM1224 4h1v1h-1zM1226 4h1v1h-1zM1223 5h1v1h-1zM1225 5h1v1h-1zM1227 5h1v1h-1zM1220 6h11v1h-11zM1221 7h1v1h-1zM1223 7h1v1h-1zM1226 7h1v1h-1zM1228 7h1v1h-1zM1220 8h1v1h-1zM1222 8h1v1h-1zM1224 8h2v1h-2zM1227 8h1v1h-1zM1229 8h1v1h-1zM1220 9h11v1h-11zM1220 10h1v1h-1zM1222 10h1v1h-1zM1228 10h1v1h-1zM1230 10h1v1h-1zM1222 11h7v1h-7zM1222 12h1v1h-1zM1228 12h1v1h-1zM1220 13h11v1h-11z" fill="#e0e0e0"/><path d="M1245 3h1v1h-1zM1240 4h10v1h-10zM1240 5h1v1h-1zM1242 5h1v1h-1zM1247 5h1v1h-1zM1249 5h1v1h-1zM1241 6h1v1h-1zM1244 6h1v1h-1zM1248 6h1v1h-1zM1240 7h10v1h-10zM1241 8h1v1h-1zM1244 8h1v1h-1zM1248 8h1v1h-1zM1241 9h1v1h-1zM1243 9h6v1h-6zM1241 10h3v1h-3zM1246 10h1v1h-1zM1248 10h1v1h-1zM1241 11h1v1h-1zM1244 11h2v1h-2zM1248 11h1v1h-1zM1241 12h1v1h-1zM1243 12h1v1h-1zM1246 12h1v1h-1zM1248 12h1v1h-1zM1241 13h8v1h-8z" fill="#e0e0e0"/><path d="M1257 3h5v1h-5zM1263 3h5v1h-5zM1269 3h1v1h-1zM1271 3h5v1h-5zM1279 3h1v1h-1zM1260 4h1v1h-1zM1265 4h1v1h-1zM1270 4h2v1h-2zM1275 4h1v1h-1zM1277 4h1v1h-1zM1279 4h1v1h-1zM1258 5h2v1h-2zM1263 5h5v1h-5zM1271 5h1v1h-1zM1273 5h1v1h-1zM1275 5h1v1h-1zM1277 5h1v1h-1zM1279 5h1v1h-1zM1259 6h1v1h-1zM1263 6h1v1h-1zM1267 6h1v1h-1zM1269 6h1v1h-1zM1271 6h1v1h-1zM1273 6h1v1h-1zM1275 6h1v1h-1zM1277 6h1v1h-1zM1279 6h1v1h-1zM1257 7h5v1h-5zM1263 7h1v1h-1zM1265 7h1v1h-1zM1267 7h1v1h-1zM1270 7h2v1h-2zM1273 7h1v1h-1zM1275 7h1v1h-1zM1277 7h1v1h-1zM1279 7h1v1h-1zM1259 8h1v1h-1zM1261 8h1v1h-1zM1263 8h1v1h-1zM1265 8h1v1h-1zM1267 8h1v1h-1zM1271 8h1v1h-1zM1273 8h1v1h-1zM1275 8h1v1h-1zM1277 8h1v1h-1zM1279 8h1v1h-1zM1259 9h1v1h-1zM1263 9h1v1h-1zM1265 9h1v1h-1zM1267 9h1v1h-1zM1271 9h1v1h-1zM1273 9h1v1h-1zM1275 9h1v1h-1zM1277 9h1v1h-1zM1279 9h1v1h-1zM1259 10h1v1h-1zM1263 10h1v1h-1zM1265 10h1v1h-1zM1267 10h1v1h-1zM1269 10h2v1h-2zM1273 10h1v1h-1zM1277 10h1v1h-1zM1279 10h1v1h-1zM1259 11h1v1h-1zM1263 11h1v1h-1zM1265 11h1v1h-1zM1267 11h1v1h-1zM1270 11h1v1h-1zM1272 11h1v1h-1zM1274 11h1v1h-1zM1279 11h1v1h-1zM1259 12h1v1h-1zM1264 12h1v1h-1zM1266 12h1v1h-1zM1270 12h2v1h-2zM1275 12h1v1h-1zM1279 12h1v1h-1zM1258 13h2v1h-2zM1262 13h2v1h-2zM1267 13h1v1h-1zM1270 13h1v1h-1zM1277 13h3v1h-3z" fill="#e0e0e0"/><path d="M589 407h5v1h-5zM597 407h1v1h-1zM589 408h1v1h-1zM593 408h1v1h-1zM597 408h1v1h-1zM589 409h1v1h-1zM591 409h1v1h-1zM593 409h7v1h-7zM589 410h1v1h-1zM591 410h1v1h-1zM593 410h1v1h-1zM597 410h1v1h-1zM589 411h1v1h-1zM591 411h1v1h-1zM593 411h1v1h-1zM596 411h2v1h-2zM589 412h1v1h-1zM591 412h1v1h-1zM593 412h1v1h-1zM596 412h2v1h-2zM589 413h1v1h-1zM591 413h1v1h-1zM593 413h1v1h-1zM595 413h1v1h-1zM597 413h1v1h-1zM591 414h1v1h-1zM595 414h1v1h-1zM597 414h1v1h-1zM590 415h1v1h-1zM592 415h1v1h-1zM594 415h1v1h-1zM597 415h1v1h-1zM590 416h1v1h-1zM593 416h1v1h-1zM597 416h1v1h-1zM589 417h1v1h-1zM596 417h2v1h-2z" fill="#ffffff"/><path d="M948 407h1v1h-1zM953 407h1v1h-1zM948 408h1v1h-1zM950 408h7v1h-7zM946 409h4v1h-4zM952 409h1v1h-1zM954 409h1v1h-1zM948 410h1v1h-1zM950 410h7v1h-7zM948 411h1v1h-1zM950 411h1v1h-1zM953 411h1v1h-1zM956 411h1v1h-1zM948 412h2v1h-2zM954 412h1v1h-1zM947 413h2v1h-2zM950 413h7v1h-7zM946 414h1v1h-1zM948 414h1v1h-1zM952 414h1v1h-1zM948 415h1v1h-1zM952 415h4v1h-4zM948 416h1v1h-1zM951 416h1v1h-1zM955 416h1v1h-1zM948 417h3v1h-3zM953 417h3v1h-3z" fill="#ffffff"/><path d="M1115 407h1v1h-1zM1117 407h3v1h-3zM1121 407h1v1h-1zM1116 408h1v1h-1zM1119 408h1v1h-1zM1121 408h1v1h-1zM1124 408h1v1h-1zM1114 409h1v1h-1zM1119 409h1v1h-1zM1121 409h1v1h-1zM1123 409h1v1h-1zM1115 410h1v1h-1zM1117 410h3v1h-3zM1121 410h2v1h-2zM1117 411h1v1h-1zM1121 411h1v1h-1zM1116 412h2v1h-2zM1120 412h5v1h-5zM1115 413h1v1h-1zM1117 413h3v1h-3zM1121 413h2v1h-2zM1114 414h2v1h-2zM1119 414h1v1h-1zM1121 414h1v1h-1zM1123 414h1v1h-1zM1115 415h1v1h-1zM1119 415h1v1h-1zM1121 415h1v1h-1zM1123 415h1v1h-1zM1115 416h1v1h-1zM1119 416h1v1h-1zM1121 416h2v1h-2zM1124 416h1v1h-1zM1115 417h1v1h-1zM1117 417h2v1h-2zM1121 417h1v1h-1zM1124 417h1v1h-1z" fill="#ffffff"/><path d="M95 426h1v1h-1zM5 427h1v1h-1zM8 427h1v1h-1zM16 427h1v1h-1zM21 427h1v1h-1zM27 427h1v1h-1zM33 427h1v1h-1zM43 427h1v1h-1zM52 427h1v1h-1zM57 427h1v1h-1zM67 427h1v1h-1zM74 427h11v1h-11zM94 427h1v1h-1zM2 428h3v1h-3zM8 428h4v1h-4zM16 428h3v1h-3zM20 428h4v1h-4zM28 428h1v1h-1zM31 428h1v1h-1zM33 428h1v1h-1zM41 428h6v1h-6zM52 428h1v1h-1zM57 428h1v1h-1zM62 428h11v1h-11zM83 428h1v1h-1zM94 428h1v1h-1zM4 429h1v1h-1zM7 429h1v1h-1zM10 429h1v1h-1zM15 429h1v1h-1zM18 429h1v1h-1zM21 429h1v1h-1zM23 429h1v1h-1zM26 429h1v1h-1zM31 429h5v1h-5zM41 429h1v1h-1zM43 429h1v1h-1zM46 429h1v1h-1zM51 429h1v1h-1zM54 429h7v1h-7zM67 429h1v1h-1zM76 429h1v1h-1zM79 429h1v1h-1zM82 429h1v1h-1zM93 429h1v1h-1zM2 430h10v1h-10zM14 430h2v1h-2zM18 430h7v1h-7zM27 430h1v1h-1zM30 430h1v1h-1zM33 430h1v1h-1zM41 430h1v1h-1zM44 430h1v1h-1zM46 430h1v1h-1zM51 430h1v1h-1zM53 430h1v1h-1zM57 430h1v1h-1zM64 430h7v1h-7zM77 430h1v1h-1zM79 430h1v1h-1zM93 430h1v1h-1zM4 431h1v1h-1zM11 431h1v1h-1zM15 431h1v1h-1zM17 431h1v1h-1zM21 431h1v1h-1zM23 431h1v1h-1zM28 431h1v1h-1zM33 431h1v1h-1zM39 431h10v1h-10zM50 431h3v1h-3zM55 431h5v1h-5zM64 431h1v1h-1zM67 431h1v1h-1zM70 431h1v1h-1zM75 431h1v1h-1zM79 431h1v1h-1zM93 431h1v1h-1zM4 432h2v1h-2zM7 432h5v1h-5zM15 432h1v1h-1zM17 432h8v1h-8zM28 432h9v1h-9zM41 432h1v1h-1zM43 432h1v1h-1zM46 432h1v1h-1zM52 432h1v1h-1zM64 432h1v1h-1zM67 432h1v1h-1zM70 432h1v1h-1zM76 432h1v1h-1zM79 432h1v1h-1zM93 432h1v1h-1zM4 433h1v1h-1zM6 433h1v1h-1zM11 433h1v1h-1zM15 433h1v1h-1zM19 433h1v1h-1zM21 433h1v1h-1zM27 433h1v1h-1zM32 433h1v1h-1zM34 433h1v1h-1zM40 433h1v1h-1zM44 433h1v1h-1zM46 433h1v1h-1zM51 433h1v1h-1zM55 433h5v1h-5zM64 433h7v1h-7zM74 433h11v1h-11zM93 433h1v1h-1zM3 434h2v1h-2zM7 434h5v1h-5zM15 434h1v1h-1zM17 434h1v1h-1zM19 434h6v1h-6zM26 434h2v1h-2zM32 434h1v1h-1zM34 434h1v1h-1zM40 434h8v1h-8zM50 434h4v1h-4zM55 434h1v1h-1zM59 434h1v1h-1zM66 434h3v1h-3zM79 434h1v1h-1zM93 434h1v1h-1zM2 435h1v1h-1zM4 435h1v1h-1zM6 435h2v1h-2zM9 435h1v1h-1zM11 435h1v1h-1zM15 435h1v1h-1zM18 435h1v1h-1zM21 435h1v1h-1zM27 435h1v1h-1zM31 435h1v1h-1zM34 435h1v1h-1zM36 435h1v1h-1zM40 435h1v1h-1zM42 435h1v1h-1zM45 435h1v1h-1zM47 435h1v1h-1zM54 435h2v1h-2zM59 435h1v1h-1zM65 435h1v1h-1zM67 435h1v1h-1zM69 435h1v1h-1zM78 435h1v1h-1zM80 435h1v1h-1zM94 435h1v1h-1zM4 436h2v1h-2zM7 436h1v1h-1zM12 436h1v1h-1zM15 436h1v1h-1zM17 436h1v1h-1zM19 436h1v1h-1zM21 436h1v1h-1zM27 436h1v1h-1zM30 436h1v1h-1zM34 436h1v1h-1zM36 436h1v1h-1zM40 436h1v1h-1zM42 436h1v1h-1zM45 436h1v1h-1zM47 436h1v1h-1zM52 436h2v1h-2zM55 436h5v1h-5zM64 436h1v1h-1zM67 436h1v1h-1zM70 436h1v1h-1zM76 436h2v1h-2zM81 436h2v1h-2zM94 436h1v1h-1zM4 437h1v1h-1zM8 437h4v1h-4zM15 437h2v1h-2zM20 437h5v1h-5zM27 437h1v1h-1zM29 437h1v1h-1zM34 437h3v1h-3zM38 437h11v1h-11zM50 437h2v1h-2zM55 437h1v1h-1zM59 437h1v1h-1zM62 437h2v1h-2zM67 437h1v1h-1zM71 437h2v1h-2zM74 437h2v1h-2zM83 437h2v1h-2zM95 437h1v1h-1z" fill="#ff0000"/><path d="M1264 427h1v1h-1zM1268 427h1v1h-1zM1276 427h1v1h-1zM1279 427h5v1h-5zM1287 427h1v1h-1zM1291 427h1v1h-1zM1295 427h1v1h-1zM1304 427h5v1h-5zM1264 428h1v1h-1zM1268 428h1v1h-1zM1271 428h2v1h-2zM1276 428h1v1h-1zM1288 428h1v1h-1zM1292 428h1v1h-1zM1294 428h1v1h-1zM1298 428h4v1h-4zM1304 428h1v1h-1zM1308 428h1v1h-1zM1262 429h5v1h-5zM1268 429h3v1h-3zM1274 429h5v1h-5zM1291 429h5v1h-5zM1298 429h1v1h-1zM1301 429h1v1h-1zM1304 429h1v1h-1zM1308 429h1v1h-1zM1264 430h1v1h-1zM1268 430h1v1h-1zM1272 430h1v1h-1zM1276 430h1v1h-1zM1278 430h7v1h-7zM1291 430h1v1h-1zM1295 430h1v1h-1zM1298 430h1v1h-1zM1301 430h1v1h-1zM1304 430h5v1h-5zM1264 431h1v1h-1zM1266 431h1v1h-1zM1268 431h5v1h-5zM1276 431h1v1h-1zM1281 431h1v1h-1zM1286 431h3v1h-3zM1291 431h1v1h-1zM1295 431h1v1h-1zM1298 431h4v1h-4zM1304 431h1v1h-1zM1308 431h1v1h-1zM1264 432h2v1h-2zM1275 432h3v1h-3zM1281 432h1v1h-1zM1288 432h1v1h-1zM1291 432h5v1h-5zM1298 432h1v1h-1zM1301 432h1v1h-1zM1304 432h1v1h-1zM1308 432h1v1h-1zM1263 433h2v1h-2zM1268 433h5v1h-5zM1275 433h2v1h-2zM1279 433h1v1h-1zM1281 433h1v1h-1zM1283 433h1v1h-1zM1288 433h1v1h-1zM1292 433h1v1h-1zM1294 433h1v1h-1zM1298 433h1v1h-1zM1301 433h1v1h-1zM1304 433h5v1h-5zM1262 434h1v1h-1zM1264 434h1v1h-1zM1268 434h1v1h-1zM1272 434h1v1h-1zM1274 434h1v1h-1zM1276 434h1v1h-1zM1279 434h1v1h-1zM1281 434h1v1h-1zM1284 434h1v1h-1zM1288 434h1v1h-1zM1290 434h1v1h-1zM1292 434h1v1h-1zM1294 434h1v1h-1zM1298 434h4v1h-4zM1304 434h1v1h-1zM1308 434h1v1h-1zM1264 435h1v1h-1zM1268 435h5v1h-5zM1276 435h1v1h-1zM1278 435h1v1h-1zM1281 435h1v1h-1zM1284 435h1v1h-1zM1288 435h2v1h-2zM1292 435h1v1h-1zM1294 435h1v1h-1zM1296 435h1v1h-1zM1303 435h1v1h-1zM1308 435h1v1h-1zM1264 436h1v1h-1zM1268 436h1v1h-1zM1272 436h1v1h-1zM1276 436h1v1h-1zM1281 436h1v1h-1zM1288 436h1v1h-1zM1291 436h1v1h-1zM1294 436h1v1h-1zM1296 436h1v1h-1zM1302 436h1v1h-1zM1306 436h1v1h-1zM1308 436h1v1h-1zM1262 437h3v1h-3zM1268 437h5v1h-5zM1276 437h1v1h-1zM1280 437h2v1h-2zM1290 437h1v1h-1zM1294 437h3v1h-3zM1300 437h2v1h-2zM1307 437h1v1h-1z" fill="#e0e0e0"/><path d="M397 630h1v1h-1zM406 630h1v1h-1zM410 630h1v1h-1zM412 630h1v1h-1zM416 630h11v1h-11zM431 630h2v1h-2zM397 631h1v1h-1zM406 631h1v1h-1zM410 631h1v1h-1zM413 631h1v1h-1zM425 631h1v1h-1zM433 631h1v1h-1zM393 632h9v1h-9zM405 632h1v1h-1zM410 632h4v1h-4zM418 632h1v1h-1zM421 632h1v1h-1zM424 632h1v1h-1zM433 632h1v1h-1zM393 633h1v1h-1zM397 633h1v1h-1zM401 633h1v1h-1zM405 633h1v1h-1zM408 633h3v1h-3zM419 633h1v1h-1zM421 633h1v1h-1zM433 633h1v1h-1zM393 634h1v1h-1zM397 634h1v1h-1zM401 634h1v1h-1zM404 634h3v1h-3zM410 634h5v1h-5zM417 634h1v1h-1zM421 634h1v1h-1zM432 634h1v1h-1zM434 634h1v1h-1zM393 635h1v1h-1zM397 635h1v1h-1zM401 635h1v1h-1zM406 635h1v1h-1zM408 635h3v1h-3zM418 635h1v1h-1zM421 635h1v1h-1zM432 635h1v1h-1zM434 635h1v1h-1zM393 636h9v1h-9zM405 636h1v1h-1zM410 636h1v1h-1zM413 636h1v1h-1zM416 636h11v1h-11zM431 636h1v1h-1zM435 636h1v1h-1zM393 637h1v1h-1zM397 637h1v1h-1zM401 637h1v1h-1zM404 637h4v1h-4zM410 637h1v1h-1zM412 637h1v1h-1zM421 637h1v1h-1zM431 637h1v1h-1zM435 637h1v1h-1zM397 638h1v1h-1zM408 638h1v1h-1zM411 638h1v1h-1zM414 638h1v1h-1zM420 638h1v1h-1zM422 638h1v1h-1zM430 638h1v1h-1zM436 638h1v1h-1zM397 639h1v1h-1zM406 639h2v1h-2zM410 639h1v1h-1zM412 639h1v1h-1zM414 639h1v1h-1zM418 639h2v1h-2zM423 639h2v1h-2zM429 639h1v1h-1zM437 639h1v1h-1zM397 640h1v1h-1zM404 640h2v1h-2zM408 640h2v1h-2zM413 640h2v1h-2zM416 640h2v1h-2zM425 640h2v1h-2zM428 640h1v1h-1zM438 640h1v1h-1z" fill="#ff0000"/><path d="M537 623h1v1h-1zM546 623h1v1h-1zM550 623h1v1h-1zM552 623h1v1h-1zM556 623h11v1h-11zM571 623h2v1h-2zM537 624h1v1h-1zM546 624h1v1h-1zM550 624h1v1h-1zM553 624h1v1h-1zM565 624h1v1h-1zM573 624h1v1h-1zM533 625h9v1h-9zM545 625h1v1h-1zM550 625h4v1h-4zM558 625h1v1h-1zM561 625h1v1h-1zM564 625h1v1h-1zM573 625h1v1h-1zM533 626h1v1h-1zM537 626h1v1h-1zM541 626h1v1h-1zM545 626h1v1h-1zM548 626h3v1h-3zM559 626h1v1h-1zM561 626h1v1h-1zM573 626h1v1h-1zM533 627h1v1h-1zM537 627h1v1h-1zM541 627h1v1h-1zM544 627h3v1h-3zM550 627h5v1h-5zM557 627h1v1h-1zM561 627h1v1h-1zM572 627h1v1h-1zM574 627h1v1h-1zM533 628h1v1h-1zM537 628h1v1h-1zM541 628h1v1h-1zM546 628h1v1h-1zM548 628h3v1h-3zM558 628h1v1h-1zM561 628h1v1h-1zM572 628h1v1h-1zM574 628h1v1h-1zM533 629h9v1h-9zM545 629h1v1h-1zM550 629h1v1h-1zM553 629h1v1h-1zM556 629h11v1h-11zM571 629h1v1h-1zM575 629h1v1h-1zM533 630h1v1h-1zM537 630h1v1h-1zM541 630h1v1h-1zM544 630h4v1h-4zM550 630h1v1h-1zM552 630h1v1h-1zM561 630h1v1h-1zM571 630h1v1h-1zM575 630h1v1h-1zM537 631h1v1h-1zM548 631h1v1h-1zM551 631h1v1h-1zM554 631h1v1h-1zM560 631h1v1h-1zM562 631h1v1h-1zM570 631h1v1h-1zM576 631h1v1h-1zM537 632h1v1h-1zM546 632h2v1h-2zM550 632h1v1h-1zM552 632h1v1h-1zM554 632h1v1h-1zM558 632h2v1h-2zM563 632h2v1h-2zM569 632h1v1h-1zM577 632h1v1h-1zM537 633h1v1h-1zM544 633h2v1h-2zM548 633h2v1h-2zM553 633h2v1h-2zM556 633h2v1h-2zM565 633h2v1h-2zM568 633h1v1h-1zM578 633h1v1h-1z" fill="#ff0000"/><path d="M286 629h1v1h-1zM291 629h1v1h-1zM302 629h1v1h-1zM286 630h1v1h-1zM291 630h1v1h-1zM298 630h9v1h-9zM284 631h5v1h-5zM290 631h2v1h-2zM293 631h1v1h-1zM298 631h1v1h-1zM286 632h1v1h-1zM289 632h1v1h-1zM291 632h1v1h-1zM294 632h1v1h-1zM298 632h1v1h-1zM300 632h6v1h-6zM286 633h1v1h-1zM288 633h1v1h-1zM291 633h1v1h-1zM298 633h1v1h-1zM300 633h1v1h-1zM303 633h1v1h-1zM286 634h2v1h-2zM291 634h1v1h-1zM294 634h1v1h-1zM298 634h1v1h-1zM300 634h7v1h-7zM285 635h2v1h-2zM291 635h1v1h-1zM293 635h1v1h-1zM298 635h1v1h-1zM300 635h1v1h-1zM303 635h1v1h-1zM284 636h1v1h-1zM286 636h1v1h-1zM292 636h1v1h-1zM298 636h1v1h-1zM300 636h1v1h-1zM304 636h1v1h-1zM286 637h1v1h-1zM291 637h1v1h-1zM298 637h1v1h-1zM300 637h1v1h-1zM302 637h1v1h-1zM304 637h1v1h-1zM306 637h1v1h-1zM286 638h1v1h-1zM290 638h1v1h-1zM297 638h1v1h-1zM300 638h2v1h-2zM303 638h1v1h-1zM305 638h2v1h-2zM284 639h3v1h-3zM288 639h2v1h-2zM296 639h1v1h-1zM300 639h1v1h-1zM303 639h1v1h-1zM306 639h1v1h-1z" fill="#ff0000"/><path d="M727 719h1v1h-1zM732 719h1v1h-1zM743 719h1v1h-1zM727 720h1v1h-1zM732 720h1v1h-1zM739 720h9v1h-9zM725 721h5v1h-5zM731 721h2v1h-2zM734 721h1v1h-1zM739 721h1v1h-1zM727 722h1v1h-1zM730 722h1v1h-1zM732 722h1v1h-1zM735 722h1v1h-1zM739 722h1v1h-1zM741 722h6v1h-6zM727 723h1v1h-1zM729 723h1v1h-1zM732 723h1v1h-1zM739 723h1v1h-1zM741 723h1v1h-1zM744 723h1v1h-1zM727 724h2v1h-2zM732 724h1v1h-1zM735 724h1v1h-1zM739 724h1v1h-1zM741 724h7v1h-7zM726 725h2v1h-2zM732 725h1v1h-1zM734 725h1v1h-1zM739 725h1v1h-1zM741 725h1v1h-1zM744 725h1v1h-1zM725 726h1v1h-1zM727 726h1v1h-1zM733 726h1v1h-1zM739 726h1v1h-1zM741 726h1v1h-1zM745 726h1v1h-1zM727 727h1v1h-1zM732 727h1v1h-1zM739 727h1v1h-1zM741 727h1v1h-1zM743 727h1v1h-1zM745 727h1v1h-1zM747 727h1v1h-1zM727 728h1v1h-1zM731 728h1v1h-1zM738 728h1v1h-1zM741 728h2v1h-2zM744 728h1v1h-1zM746 728h2v1h-2zM725 729h3v1h-3zM729 729h2v1h-2zM737 729h1v1h-1zM741 729h1v1h-1zM744 729h1v1h-1zM747 729h1v1h-1z" fill="#ff0000"/><path d="M1084 884h1v1h-1zM1089 884h1v1h-1zM1100 884h1v1h-1zM1084 885h1v1h-1zM1089 885h1v1h-1zM1096 885h9v1h-9zM1082 886h5v1h-5zM1088 886h2v1h-2zM1091 886h1v1h-1zM1096 886h1v1h-1zM1084 887h1v1h-1zM1087 887h1v1h-1zM1089 887h1v1h-1zM1092 887h1v1h-1zM1096 887h1v1h-1zM1098 887h6v1h-6zM1084 888h1v1h-1zM1086 888h1v1h-1zM1089 888h1v1h-1zM1096 888h1v1h-1zM1098 888h1v1h-1zM1101 888h1v1h-1zM1084 889h2v1h-2zM1089 889h1v1h-1zM1092 889h1v1h-1zM1096 889h1v1h-1zM1098 889h7v1h-7zM1083 890h2v1h-2zM1089 890h1v1h-1zM1091 890h1v1h-1zM1096 890h1v1h-1zM1098 890h1v1h-1zM1101 890h1v1h-1zM1082 891h1v1h-1zM1084 891h1v1h-1zM1090 891h1v1h-1zM1096 891h1v1h-1zM1098 891h1v1h-1zM1102 891h1v1h-1zM1084 892h1v1h-1zM1089 892h1v1h-1zM1096 892h1v1h-1zM1098 892h1v1h-1zM1100 892h1v1h-1zM1102 892h1v1h-1zM1104 892h1v1h-1zM1084 893h1v1h-1zM1088 893h1v1h-1zM1095 893h1v1h-1zM1098 893h2v1h-2zM1101 893h1v1h-1zM1103 893h2v1h-2zM1082 894h3v1h-3zM1086 894h2v1h-2zM1094 894h1v1h-1zM1098 894h1v1h-1zM1101 894h1v1h-1zM1104 894h1v1h-1z" fill="#ff0000"/></svg>
</body></html>
